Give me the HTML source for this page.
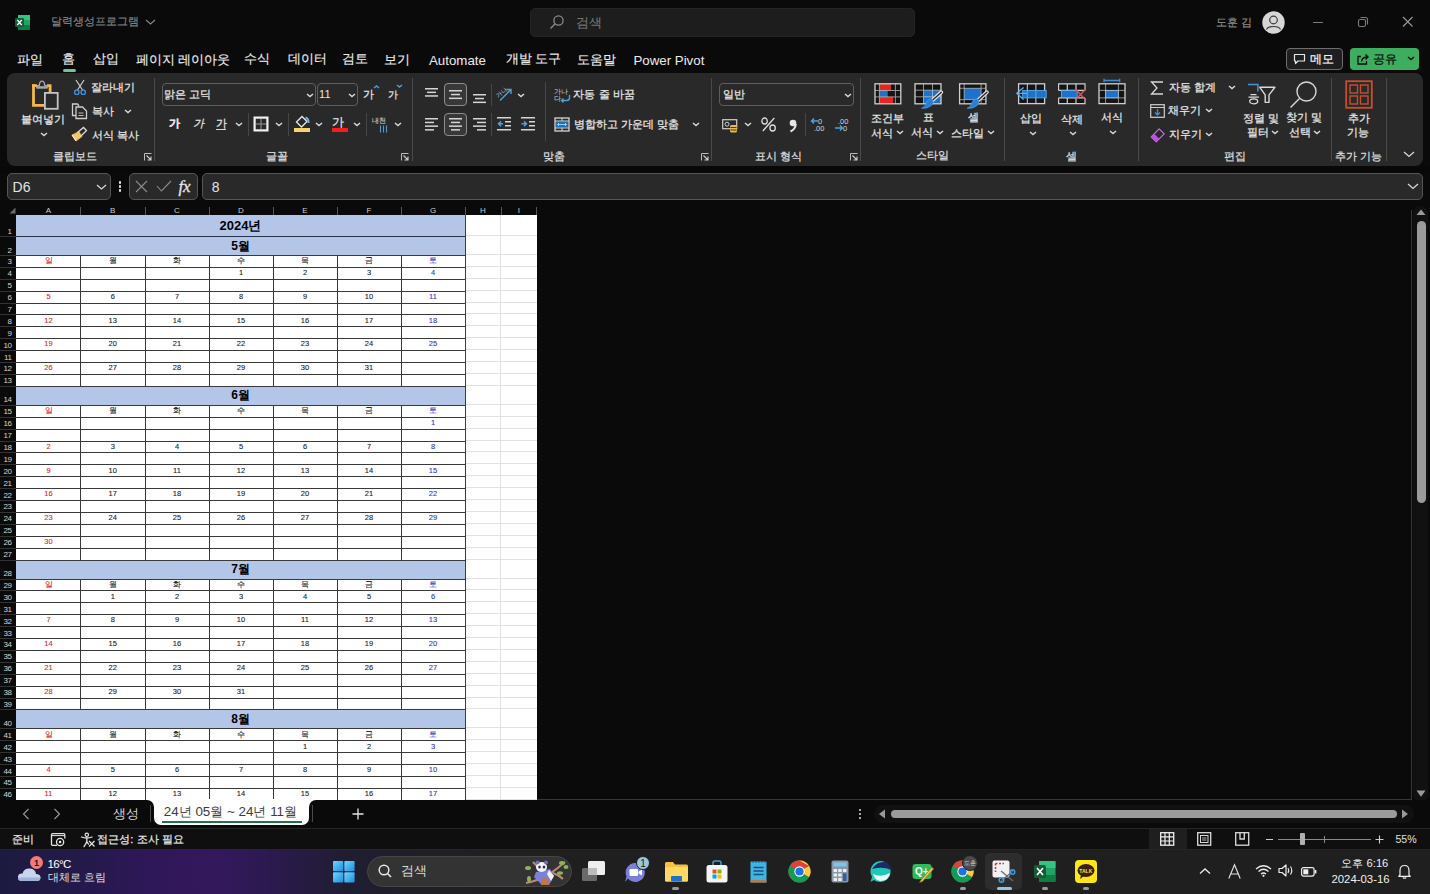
<!DOCTYPE html><html><head><meta charset="utf-8"><style>
*{margin:0;padding:0;box-sizing:border-box}
html,body{width:1430px;height:894px;overflow:hidden;background:#0a0a0a;font-family:"Liberation Sans",sans-serif;color:#fff}
.ab{position:absolute}
.t{position:absolute;white-space:nowrap;line-height:1}
.tx{position:absolute;white-space:nowrap;display:flex;align-items:center;line-height:1}
.k{-webkit-text-stroke:0.25px currentColor}
svg{overflow:visible}

.cell{display:flex;align-items:center;justify-content:center;font-size:7.5px;color:#111;-webkit-text-stroke:0.1px currentColor}
.band{display:flex;align-items:center;justify-content:center;font-weight:bold;color:#000}
.colh{display:flex;align-items:center;justify-content:center;font-size:8px;color:#ccc}
.rowh{display:flex;align-items:flex-end;justify-content:flex-end;font-size:8px;color:#d4d4d4;padding-right:3.5px;letter-spacing:-0.4px;padding-bottom:0.5px}
</style></head><body><div class="ab" style="left:0px;top:0px;width:1430px;height:44px;background:#0a0a0a;border-radius:0px;"></div><svg class="ab" style="left:14px;top:14px;" width="17" height="17" viewBox="0 0 17 17"><rect x="4" y="1" width="12" height="15" rx="1.5" fill="#21a366"/><rect x="4" y="1" width="12" height="5" fill="#33c481"/><rect x="4" y="11" width="12" height="5" rx="1" fill="#107c41"/><rect x="1" y="4" width="9" height="9" rx="1.2" fill="#185c37"/><path d="M3.3 6 L7.7 11 M7.7 6 L3.3 11" stroke="#fff" stroke-width="1.3"/></svg><div class="tx" style="left:51.42px;top:14.16px;height:15.68px;font-size:11.20px;color:#8a8a8a;font-weight:normal;-webkit-text-stroke:0.1px currentColor;">달력생성프로그램</div><svg class="ab" style="left:144.5px;top:18.8px" width="11" height="6.5"><polyline points="1,1 5.5,5.0 10,1" fill="none" stroke="#8a8a8a" stroke-width="1.1"/></svg><div class="ab" style="left:530px;top:8px;width:385px;height:29px;background:#1d1d1d;border:1px solid #242424;border-radius:5px;"></div><svg class="ab" style="left:549px;top:14px;" width="16" height="16" viewBox="0 0 16 16"><circle cx="9.5" cy="6.5" r="4.6" fill="none" stroke="#8a8a8a" stroke-width="1.3"/><path d="M6.2 9.8 L1.5 14.5" stroke="#8a8a8a" stroke-width="1.4"/></svg><div class="tx" style="left:575.77px;top:14.18px;height:17.64px;font-size:12.60px;color:#767676;font-weight:normal;-webkit-text-stroke:0.1px currentColor;">검색</div><div class="tx" style="left:1216.32px;top:14.72px;height:15.96px;font-size:11.40px;color:#8e8e8e;font-weight:normal;-webkit-text-stroke:0.2px currentColor;">도훈 김</div><svg class="ab" style="left:1262px;top:11px;" width="23" height="23" viewBox="0 0 23 23"><circle cx="11.5" cy="11.5" r="11.2" fill="#d6d6d6"/><circle cx="11.5" cy="9" r="3.8" fill="none" stroke="#3a3a3a" stroke-width="1.2"/><path d="M4.5 18.5 C6 14.5 17 14.5 18.5 18.5" fill="none" stroke="#3a3a3a" stroke-width="1.2"/></svg><div class="ab" style="left:1313px;top:22px;width:10px;height:1px;background:#7c7c7c;border-radius:0px;"></div><svg class="ab" style="left:1357px;top:16px;" width="12" height="12" viewBox="0 0 12 12"><rect x="1.5" y="3.5" width="7" height="7" rx="1.5" fill="none" stroke="#7c7c7c" stroke-width="1.1"/><path d="M3.5 1.5 H8.5 Q10.5 1.5 10.5 3.5 V8.5" fill="none" stroke="#7c7c7c" stroke-width="1.1"/></svg><svg class="ab" style="left:1402px;top:16px;" width="12" height="12" viewBox="0 0 12 12"><path d="M1 1 L10.5 10.5 M10.5 1 L1 10.5" stroke="#9a9a9a" stroke-width="1.1"/></svg><div class="tx" style="left:16.58px;top:50.09px;height:18.62px;font-size:13.30px;color:#ececec;font-weight:normal;-webkit-text-stroke:0.15px currentColor;">파일</div><div class="tx" style="left:61.79px;top:49.69px;height:18.62px;font-size:13.30px;color:#ececec;font-weight:normal;-webkit-text-stroke:0.15px currentColor;">홈</div><div class="tx" style="left:93.00px;top:49.69px;height:18.62px;font-size:13.30px;color:#ececec;font-weight:normal;-webkit-text-stroke:0.15px currentColor;">삽입</div><div class="tx" style="left:135.78px;top:50.09px;height:18.62px;font-size:13.30px;color:#ececec;font-weight:normal;-webkit-text-stroke:0.15px currentColor;">페이지 레이아웃</div><div class="tx" style="left:243.98px;top:49.69px;height:18.62px;font-size:13.30px;color:#ececec;font-weight:normal;-webkit-text-stroke:0.15px currentColor;">수식</div><div class="tx" style="left:288.20px;top:49.69px;height:18.62px;font-size:13.30px;color:#ececec;font-weight:normal;-webkit-text-stroke:0.15px currentColor;">데이터</div><div class="tx" style="left:341.98px;top:49.69px;height:18.62px;font-size:13.30px;color:#ececec;font-weight:normal;-webkit-text-stroke:0.15px currentColor;">검토</div><div class="tx" style="left:384.39px;top:50.09px;height:18.62px;font-size:13.30px;color:#ececec;font-weight:normal;-webkit-text-stroke:0.15px currentColor;">보기</div><div class="tx" style="left:429.00px;top:50.89px;height:18.62px;font-size:13.30px;color:#ececec;font-weight:normal;">Automate</div><div class="tx" style="left:505.77px;top:49.69px;height:18.62px;font-size:13.30px;color:#ececec;font-weight:normal;-webkit-text-stroke:0.15px currentColor;">개발 도구</div><div class="tx" style="left:576.79px;top:50.09px;height:18.62px;font-size:13.30px;color:#ececec;font-weight:normal;-webkit-text-stroke:0.15px currentColor;">도움말</div><div class="tx" style="left:633.38px;top:50.89px;height:18.62px;font-size:13.30px;color:#ececec;font-weight:normal;">Power Pivot</div><div class="ab" style="left:63px;top:69px;width:13px;height:3px;background:#6bc49b;border-radius:1.5px;"></div><div class="ab" style="left:1286px;top:48px;width:57px;height:22px;background:#1f1f1f;border:1px solid #6e6e6e;border-radius:4px;"></div><svg class="ab" style="left:1293px;top:53px;" width="13" height="12" viewBox="0 0 13 12"><path d="M1.5 1.5 H11.5 V8 H5 L2.5 10.5 V8 H1.5 Z" fill="none" stroke="#e8e8e8" stroke-width="1.2" stroke-linejoin="round"/></svg><div class="tx k" style="left:1310.36px;top:50.88px;height:16.24px;font-size:11.60px;color:#f0f0f0;font-weight:normal;">메모</div><div class="ab" style="left:1350px;top:48px;width:69px;height:22px;background:#3dae60;border-radius:4px;"></div><svg class="ab" style="left:1356px;top:52px;" width="14" height="14" viewBox="0 0 14 14"><path d="M5 4.5 H2 V12 H10.5 V9" fill="none" stroke="#0c0c0c" stroke-width="1.3"/><path d="M5.5 9.5 C6 6.5 8 5 11.5 5 M9.5 2.5 L12 5 L9.5 7.5" fill="none" stroke="#0c0c0c" stroke-width="1.3"/></svg><div class="tx k" style="left:1372.80px;top:50.88px;height:16.24px;font-size:11.60px;color:#0c0c0c;font-weight:normal;">공유</div><svg class="ab" style="left:1407.2px;top:56.4px" width="8" height="5.0"><polyline points="1,1 4.0,3.5 7,1" fill="none" stroke="#0c0c0c" stroke-width="1.4"/></svg><div class="ab" style="left:7px;top:73px;width:1416px;height:93px;background:#292929;border-radius:8px;"></div><div class="ab" style="left:0px;top:166px;width:1430px;height:7px;background:#080808;border-radius:0px;"></div><svg class="ab" style="left:30px;top:79px;" width="29" height="31" viewBox="0 0 29 31"><path d="M3.5 5.2 V26.4 H14" fill="none" stroke="#f2b84b" stroke-width="2.8"/><path d="M2.1 6.6 H7 M17 6.6 H20.1 V13" fill="none" stroke="#f2b84b" stroke-width="2.8"/><path d="M7 8.8 V6.6 H9.2 Q9.6 2.1 12 2.1 Q14.4 2.1 14.8 6.6 H17 V8.8 Z" fill="#292929" stroke="#a8a8a8" stroke-width="1.4" stroke-linejoin="round"/><rect x="6.4" y="7.2" width="11.2" height="2.2" fill="#a8a8a8"/><rect x="14.9" y="13.9" width="12.8" height="15.9" fill="#292929" stroke="#c4c4c4" stroke-width="1.8"/></svg><div class="tx k" style="left:20.75px;top:112.02px;height:15.96px;font-size:11.40px;color:#e6e6e6;font-weight:normal;">붙여넣기</div><svg class="ab" style="left:40.0px;top:131.5px" width="8" height="5.0"><polyline points="1,1 4.0,3.5 7,1" fill="none" stroke="#d8d8d8" stroke-width="1.5"/></svg><svg class="ab" style="left:73px;top:79px;" width="14" height="17" viewBox="0 0 14 17"><path d="M3 1 L9.5 11 M11 1 L4.5 11" stroke="#cfcfcf" stroke-width="1.2"/><circle cx="3.8" cy="13.2" r="2.2" fill="none" stroke="#3d8fd6" stroke-width="1.4"/><circle cx="10.2" cy="13.2" r="2.2" fill="none" stroke="#3d8fd6" stroke-width="1.4"/></svg><div class="tx k" style="left:90.76px;top:79.52px;height:15.96px;font-size:11.40px;color:#e6e6e6;font-weight:normal;">잘라내기</div><svg class="ab" style="left:71px;top:103px;" width="17" height="17" viewBox="0 0 17 17"><path d="M5 12.5 H1.5 V1 H6.5 L8 3" fill="none" stroke="#cfcfcf" stroke-width="1.3"/><path d="M5 4 H11.5 L15.5 8 V15.5 H5 Z" fill="none" stroke="#cfcfcf" stroke-width="1.3"/><path d="M7.5 10 H12.5 M7.5 12.5 H12.5" stroke="#cfcfcf" stroke-width="0.9"/></svg><div class="tx k" style="left:91.76px;top:103.32px;height:15.96px;font-size:11.40px;color:#e6e6e6;font-weight:normal;">복사</div><svg class="ab" style="left:123.5px;top:109.0px" width="8" height="5.0"><polyline points="1,1 4.0,3.5 7,1" fill="none" stroke="#d8d8d8" stroke-width="1.5"/></svg><svg class="ab" style="left:71px;top:126px;" width="17" height="16" viewBox="0 0 17 16"><path d="M1 9 L8 5.5 L11 10.5 L5 15 Z" fill="#f4c869" stroke="#f0b03a" stroke-width="0.8"/><path d="M1 9 L5 15" stroke="#ffffff" stroke-width="1"/><path d="M6.5 6.5 L12.5 1.5 L15.5 4.5 L10 10" fill="none" stroke="#dcdcdc" stroke-width="1.3"/></svg><div class="tx k" style="left:91.75px;top:127.42px;height:15.96px;font-size:11.40px;color:#e6e6e6;font-weight:normal;">서식 복사</div><div class="tx k" style="left:52.97px;top:149.12px;height:15.96px;font-size:11.40px;color:#dedede;font-weight:normal;">클립보드</div><svg class="ab" style="left:144px;top:153px;" width="8" height="8" viewBox="0 0 8 8"><path d="M0.5 7.5 V0.5 H7.5" fill="none" stroke="#bdbdbd" stroke-width="1"/><path d="M2.5 2.5 L7 7 M7 3.5 V7 H3.5" fill="none" stroke="#d0d0d0" stroke-width="1.1"/></svg><div class="ab" style="left:154px;top:78px;width:1px;height:83px;background:#4a4a4a"></div><div class="ab" style="left:162px;top:83px;width:154px;height:23px;background:#292929;border:1px solid #5e5e5e;border-radius:4px;"></div><div class="tx k" style="left:163.97px;top:86.62px;height:15.96px;font-size:11.40px;color:#e6e6e6;font-weight:normal;">맑은 고딕</div><svg class="ab" style="left:306.0px;top:92.5px" width="8" height="5.0"><polyline points="1,1 4.0,3.5 7,1" fill="none" stroke="#d8d8d8" stroke-width="1.5"/></svg><div class="ab" style="left:317px;top:83px;width:41px;height:23px;background:#292929;border:1px solid #5e5e5e;border-radius:4px;"></div><div class="tx" style="left:319.12px;top:87.30px;height:15.40px;font-size:11.00px;color:#e6e6e6;font-weight:normal;">11</div><svg class="ab" style="left:348.0px;top:92.5px" width="8" height="5.0"><polyline points="1,1 4.0,3.5 7,1" fill="none" stroke="#d8d8d8" stroke-width="1.5"/></svg><div class="tx k" style="left:362.5px;top:87.2px;height:14.7px;font-size:10.5px;color:#e6e6e6;font-weight:normal;">가</div><svg class="ab" style="left:372.5px;top:85.2px" width="7" height="4.5"><polyline points="1,3.0 3.5,1 6,3.0" fill="none" stroke="#4aa3df" stroke-width="1.4"/></svg><div class="tx k" style="left:387.5px;top:88.0px;height:14.0px;font-size:10px;color:#e6e6e6;font-weight:normal;">가</div><svg class="ab" style="left:396.0px;top:84.2px" width="7" height="4.5"><polyline points="1,1 3.5,3.0 6,1" fill="none" stroke="#4aa3df" stroke-width="1.4"/></svg><div class="tx k" style="left:169.0px;top:115.8px;height:15.4px;font-size:11px;color:#e6e6e6;font-weight:bold;">가</div><div class="tx k" style="left:192.5px;top:115.8px;height:15.4px;font-size:11px;color:#e6e6e6;font-weight:normal;font-style:italic;">가</div><div class="tx k" style="left:216.0px;top:115.8px;height:15.4px;font-size:11px;color:#e6e6e6;font-weight:normal;">가</div><div class="ab" style="left:216px;top:129px;width:10px;height:1px;background:#d8d8d8;border-radius:0px;"></div><svg class="ab" style="left:234.5px;top:121.5px" width="8" height="5.0"><polyline points="1,1 4.0,3.5 7,1" fill="none" stroke="#d8d8d8" stroke-width="1.5"/></svg><div class="ab" style="left:248px;top:113px;width:1px;height:23px;background:#464646"></div><svg class="ab" style="left:253px;top:116px;" width="16" height="16" viewBox="0 0 16 16"><rect x="1.6" y="1.6" width="12.8" height="12.8" fill="none" stroke="#f2f2f2" stroke-width="2.2"/><path d="M8 3 V13 M3 8 H13" stroke="#9a9a9a" stroke-width="1"/></svg><svg class="ab" style="left:274.7px;top:121.5px" width="8" height="5.0"><polyline points="1,1 4.0,3.5 7,1" fill="none" stroke="#d8d8d8" stroke-width="1.5"/></svg><div class="ab" style="left:288px;top:113px;width:1px;height:23px;background:#464646"></div><svg class="ab" style="left:293px;top:113px;" width="18" height="20" viewBox="0 0 18 20"><path d="M3.5 9 L9 3.5 L14 8.5 L8.5 14 Z" fill="none" stroke="#e8e8e8" stroke-width="1.3"/><path d="M12.5 4.5 Q16 6 15.5 10" fill="none" stroke="#6fb2e3" stroke-width="2"/><rect x="1" y="15" width="16" height="4" fill="#f5d56b"/></svg><svg class="ab" style="left:315.2px;top:121.5px" width="8" height="5.0"><polyline points="1,1 4.0,3.5 7,1" fill="none" stroke="#d8d8d8" stroke-width="1.5"/></svg><div class="tx k" style="left:332.0px;top:113.6px;height:16.8px;font-size:12px;color:#e6e6e6;font-weight:normal;">가</div><div class="ab" style="left:332px;top:128px;width:16px;height:4px;background:#ff1a1a;border-radius:0px;"></div><svg class="ab" style="left:353.4px;top:121.5px" width="8" height="5.0"><polyline points="1,1 4.0,3.5 7,1" fill="none" stroke="#d8d8d8" stroke-width="1.5"/></svg><div class="ab" style="left:366px;top:113px;width:1px;height:23px;background:#464646"></div><div class="tx k" style="left:371.5px;top:115.6px;height:9.8px;font-size:7px;color:#bdbdbd;font-weight:normal;-webkit-text-stroke:0.2px currentColor;">내천</div><svg class="ab" style="left:379px;top:125px;" width="9" height="8" viewBox="0 0 9 8"><path d="M1.5 0.5 V7.5 M4.5 0.5 V7.5 M7.5 0.5 V7.5" stroke="#4a9ad8" stroke-width="1.1"/></svg><svg class="ab" style="left:393.5px;top:121.5px" width="8" height="5.0"><polyline points="1,1 4.0,3.5 7,1" fill="none" stroke="#d8d8d8" stroke-width="1.5"/></svg><div class="tx k" style="left:265.75px;top:148.72px;height:15.96px;font-size:11.40px;color:#dedede;font-weight:normal;">글꼴</div><svg class="ab" style="left:401px;top:153px;" width="8" height="8" viewBox="0 0 8 8"><path d="M0.5 7.5 V0.5 H7.5" fill="none" stroke="#bdbdbd" stroke-width="1"/><path d="M2.5 2.5 L7 7 M7 3.5 V7 H3.5" fill="none" stroke="#d0d0d0" stroke-width="1.1"/></svg><div class="ab" style="left:412px;top:78px;width:1px;height:83px;background:#4a4a4a"></div><div class="ab" style="left:444px;top:83px;width:23px;height:23px;background:#383838;border:1px solid #8e8e8e;border-radius:4px;"></div><div class="ab" style="left:444px;top:113px;width:23px;height:23px;background:#383838;border:1px solid #8e8e8e;border-radius:4px;"></div><svg class="ab" style="left:425px;top:87.5px;" width="13" height="12.8" viewBox="0 0 13 12.8"><rect x="0.0" y="0.0" width="13" height="1.5" fill="#d6d6d6"/><rect x="2.0" y="3.6" width="9" height="1.5" fill="#d6d6d6"/><rect x="0.0" y="7.2" width="13" height="1.5" fill="#d6d6d6"/></svg><svg class="ab" style="left:449px;top:89.5px;" width="13" height="13.399999999999999" viewBox="0 0 13 13.399999999999999"><rect x="0.0" y="0.0" width="13" height="1.5" fill="#d6d6d6"/><rect x="2.0" y="3.8" width="9" height="1.5" fill="#d6d6d6"/><rect x="0.0" y="7.6" width="13" height="1.5" fill="#d6d6d6"/></svg><svg class="ab" style="left:472.5px;top:93.5px;" width="13" height="13.399999999999999" viewBox="0 0 13 13.399999999999999"><rect x="0.0" y="0.0" width="13" height="1.5" fill="#d6d6d6"/><rect x="2.0" y="3.8" width="9" height="1.5" fill="#d6d6d6"/><rect x="0.0" y="7.6" width="13" height="1.5" fill="#d6d6d6"/></svg><svg class="ab" style="left:425px;top:117.5px;" width="13" height="16.8" viewBox="0 0 13 16.8"><rect x="0" y="0.0" width="13" height="1.5" fill="#d6d6d6"/><rect x="0" y="3.7" width="9" height="1.5" fill="#d6d6d6"/><rect x="0" y="7.4" width="13" height="1.5" fill="#d6d6d6"/><rect x="0" y="11.100000000000001" width="9" height="1.5" fill="#d6d6d6"/></svg><svg class="ab" style="left:449px;top:117.5px;" width="13" height="16.8" viewBox="0 0 13 16.8"><rect x="0.0" y="0.0" width="13" height="1.5" fill="#d6d6d6"/><rect x="2.0" y="3.7" width="9" height="1.5" fill="#d6d6d6"/><rect x="0.0" y="7.4" width="13" height="1.5" fill="#d6d6d6"/><rect x="2.0" y="11.100000000000001" width="9" height="1.5" fill="#d6d6d6"/></svg><svg class="ab" style="left:472.5px;top:117.5px;" width="13" height="16.8" viewBox="0 0 13 16.8"><rect x="0" y="0.0" width="13" height="1.5" fill="#d6d6d6"/><rect x="4" y="3.7" width="9" height="1.5" fill="#d6d6d6"/><rect x="0" y="7.4" width="13" height="1.5" fill="#d6d6d6"/><rect x="4" y="11.100000000000001" width="9" height="1.5" fill="#d6d6d6"/></svg><div class="ab" style="left:491px;top:84px;width:1px;height:22px;background:#464646"></div><div class="ab" style="left:491px;top:113px;width:1px;height:23px;background:#464646"></div><svg class="ab" style="left:496px;top:86px;" width="18" height="16" viewBox="0 0 18 16"><text x="0" y="10" font-size="6" fill="#d8d8d8" transform="rotate(-40 4 8)" font-family="Liberation Sans">가나</text><path d="M4 14.5 L15 3.5 M10.5 3.5 H15 V8" fill="none" stroke="#4aa3df" stroke-width="1.4"/></svg><svg class="ab" style="left:516.7px;top:92.5px" width="8" height="5.0"><polyline points="1,1 4.0,3.5 7,1" fill="none" stroke="#d8d8d8" stroke-width="1.5"/></svg><svg class="ab" style="left:497px;top:117px;" width="15" height="15" viewBox="0 0 15 15"><rect x="0" y="0" width="14" height="1.5" fill="#d6d6d6"/><rect x="8" y="4" width="6" height="1.5" fill="#d6d6d6"/><rect x="8" y="8" width="6" height="1.5" fill="#d6d6d6"/><rect x="0" y="12" width="14" height="1.5" fill="#d6d6d6"/><path d="M6 6.7 H1.5 M4 4.2 L1.5 6.7 L4 9.2" fill="none" stroke="#4aa3df" stroke-width="1.5"/></svg><svg class="ab" style="left:521px;top:117px;" width="15" height="15" viewBox="0 0 15 15"><rect x="0" y="0" width="14" height="1.5" fill="#d6d6d6"/><rect x="8" y="4" width="6" height="1.5" fill="#d6d6d6"/><rect x="8" y="8" width="6" height="1.5" fill="#d6d6d6"/><rect x="0" y="12" width="14" height="1.5" fill="#d6d6d6"/><path d="M0.5 6.7 H5.5 M3 4.2 L5.5 6.7 L3 9.2" fill="none" stroke="#4aa3df" stroke-width="1.5"/></svg><div class="ab" style="left:545px;top:82px;width:1px;height:59px;background:#464646"></div><svg class="ab" style="left:554px;top:87px;" width="18" height="16" viewBox="0 0 18 16"><text x="0" y="6.5" font-size="6.5" fill="#d8d8d8" font-family="Liberation Sans">가나</text><text x="0" y="13.5" font-size="6.5" fill="#d8d8d8" font-family="Liberation Sans">다</text><path d="M15.5 8 V11 Q15.5 13.5 12.5 13.5 H7.5 M9.5 11.5 L7.5 13.5 L9.5 15.5" fill="none" stroke="#4aa3df" stroke-width="1.4"/></svg><div class="tx k" style="left:573.35px;top:87.12px;height:15.96px;font-size:11.40px;color:#e6e6e6;font-weight:normal;">자동 줄 바꿈</div><svg class="ab" style="left:554px;top:117px;" width="16" height="15" viewBox="0 0 16 15"><rect x="1" y="1" width="14" height="13" fill="none" stroke="#d6d6d6" stroke-width="1.3"/><rect x="2" y="4.5" width="12" height="6" fill="#1f6fb2"/><path d="M1 4 H15 M1 11 H15 M8 1 V4 M8 11 V14" stroke="#d6d6d6" stroke-width="1"/><path d="M3.5 7.5 H12.5 M5 6 L3.5 7.5 L5 9 M11 6 L12.5 7.5 L11 9" fill="none" stroke="#8fd0ff" stroke-width="1"/></svg><div class="tx k" style="left:573.58px;top:116.72px;height:15.96px;font-size:11.40px;color:#e6e6e6;font-weight:normal;">병합하고 가운데 맞춤</div><svg class="ab" style="left:692.0px;top:122.0px" width="8" height="5.0"><polyline points="1,1 4.0,3.5 7,1" fill="none" stroke="#d8d8d8" stroke-width="1.5"/></svg><div class="tx k" style="left:542.91px;top:149.22px;height:15.96px;font-size:11.40px;color:#dedede;font-weight:normal;">맞춤</div><svg class="ab" style="left:701px;top:153px;" width="8" height="8" viewBox="0 0 8 8"><path d="M0.5 7.5 V0.5 H7.5" fill="none" stroke="#bdbdbd" stroke-width="1"/><path d="M2.5 2.5 L7 7 M7 3.5 V7 H3.5" fill="none" stroke="#d0d0d0" stroke-width="1.1"/></svg><div class="ab" style="left:711px;top:78px;width:1px;height:83px;background:#4a4a4a"></div><div class="ab" style="left:719px;top:83px;width:135px;height:23px;background:#292929;border:1px solid #5e5e5e;border-radius:4px;"></div><div class="tx k" style="left:722.77px;top:86.62px;height:15.96px;font-size:11.40px;color:#e6e6e6;font-weight:normal;">일반</div><svg class="ab" style="left:844.0px;top:92.5px" width="8" height="5.0"><polyline points="1,1 4.0,3.5 7,1" fill="none" stroke="#d8d8d8" stroke-width="1.5"/></svg><svg class="ab" style="left:722px;top:119px;" width="17" height="14" viewBox="0 0 17 14"><rect x="0.7" y="0.7" width="14" height="9" fill="none" stroke="#cfcfcf" stroke-width="1.2"/><circle cx="5" cy="5.2" r="2" fill="none" stroke="#cfcfcf" stroke-width="1"/><rect x="8" y="6" width="7" height="7.5" rx="1.5" fill="#e7b94a"/><path d="M8.5 8.5 H14.5 M8.5 11 H14.5" stroke="#292929" stroke-width="0.9"/></svg><svg class="ab" style="left:744.0px;top:121.5px" width="8" height="5.0"><polyline points="1,1 4.0,3.5 7,1" fill="none" stroke="#d8d8d8" stroke-width="1.5"/></svg><svg class="ab" style="left:760px;top:116px;" width="18" height="17" viewBox="0 0 18 17"><ellipse cx="4.6" cy="5" rx="2.7" ry="3" fill="none" stroke="#dedede" stroke-width="1.3"/><ellipse cx="12.6" cy="12" rx="2.7" ry="3" fill="none" stroke="#dedede" stroke-width="1.3"/><path d="M14.3 2 L2.8 15" stroke="#dedede" stroke-width="1.3"/></svg><svg class="ab" style="left:788px;top:119px;" width="10" height="13" viewBox="0 0 10 13"><circle cx="5" cy="4" r="3.3" fill="#e6e6e6"/><path d="M7.8 5 Q7.5 10 2.5 12.5" fill="none" stroke="#e6e6e6" stroke-width="2"/></svg><div class="ab" style="left:805px;top:113px;width:1px;height:23px;background:#464646"></div><svg class="ab" style="left:810px;top:117px;" width="17" height="15" viewBox="0 0 17 15"><text x="8" y="7" font-size="7.5" fill="#d8d8d8" font-family="Liberation Sans">0</text><text x="4" y="14" font-size="7.5" fill="#d8d8d8" font-family="Liberation Sans">.00</text><path d="M8 4 H1.5 M4 1.5 L1.5 4 L4 6.5" fill="none" stroke="#4aa3df" stroke-width="1.4"/></svg><svg class="ab" style="left:834px;top:117px;" width="17" height="15" viewBox="0 0 17 15"><text x="4" y="7" font-size="7.5" fill="#d8d8d8" font-family="Liberation Sans">.00</text><text x="9" y="14" font-size="7.5" fill="#d8d8d8" font-family="Liberation Sans">0</text><path d="M1 11 H8.5 M6 8.5 L8.5 11 L6 13.5" fill="none" stroke="#4aa3df" stroke-width="1.4"/></svg><div class="tx k" style="left:754.96px;top:148.52px;height:15.96px;font-size:11.40px;color:#dedede;font-weight:normal;">표시 형식</div><svg class="ab" style="left:850px;top:153px;" width="8" height="8" viewBox="0 0 8 8"><path d="M0.5 7.5 V0.5 H7.5" fill="none" stroke="#bdbdbd" stroke-width="1"/><path d="M2.5 2.5 L7 7 M7 3.5 V7 H3.5" fill="none" stroke="#d0d0d0" stroke-width="1.1"/></svg><div class="ab" style="left:860px;top:78px;width:1px;height:83px;background:#4a4a4a"></div><svg class="ab" style="left:874px;top:83px;" width="28" height="22" viewBox="0 0 28 22"><rect x="1" y="0.8" width="25.8" height="20" fill="#141414"/><rect x="5.4" y="0.8" width="11.7" height="6.7" fill="#e5261d"/><rect x="5.4" y="7.5" width="8.3" height="6.4" fill="#1f72c9"/><rect x="5.4" y="13.9" width="13.9" height="6.9" fill="#e5261d"/><rect x="1" y="0.8" width="25.8" height="20" fill="none" stroke="#cfcfcf" stroke-width="1.3"/><path d="M5.4 0.8 V20.8 M21.4 0.8 V20.8 M1 7.5 H26.8 M1 13.9 H26.8" stroke="#cfcfcf" stroke-width="0.9" opacity="0.75"/></svg><svg class="ab" style="left:914px;top:83px;" width="30" height="27" viewBox="0 0 30 27"><rect x="1" y="0.8" width="26" height="20" fill="#141414"/><rect x="9.5" y="7.2" width="17.5" height="13.6" fill="#1f72c9"/><rect x="1" y="0.8" width="26" height="20" fill="none" stroke="#cfcfcf" stroke-width="1.3"/><path d="M9.5 0.8 V20.8 M18.5 0.8 V20.8 M1 7.2 H27 M1 13.8 H27" stroke="#cfcfcf" stroke-width="0.9" opacity="0.75"/><path d="M27.3 9.2 L18.2 17.6" stroke="#e4e4e4" stroke-width="3.8" stroke-linecap="round"/><path d="M27.3 9.2 L18.2 17.6" stroke="#292929" stroke-width="1.4" stroke-linecap="round"/><path d="M18.5 16.5 Q20.5 19.5 17.5 22.5 Q13.5 26 7.5 25.3 Q11.5 23.5 12 20.5 Q13 16.5 16.5 15.8 Z" fill="#2a7fd6" stroke="#4ea6ea" stroke-width="0.6"/></svg><svg class="ab" style="left:959px;top:83px;" width="31" height="27" viewBox="0 0 31 27"><rect x="0.6" y="0.8" width="26.3" height="20" fill="#141414"/><rect x="5.2" y="5.3" width="16.9" height="11.3" fill="#1f72c9"/><rect x="0.6" y="0.8" width="26.3" height="20" fill="none" stroke="#cfcfcf" stroke-width="1.3"/><path d="M5.2 0.8 V20.8 M22.1 0.8 V20.8 M0.6 5.3 H26.9 M0.6 16.6 H26.9" stroke="#cfcfcf" stroke-width="0.9" opacity="0.75"/><path d="M27.900000000000002 9.2 L18.8 17.6" stroke="#e4e4e4" stroke-width="3.8" stroke-linecap="round"/><path d="M27.900000000000002 9.2 L18.8 17.6" stroke="#292929" stroke-width="1.4" stroke-linecap="round"/><path d="M19.1 16.5 Q21.1 19.5 18.1 22.5 Q14.1 26 8.1 25.3 Q12.1 23.5 12.6 20.5 Q13.6 16.5 17.1 15.8 Z" fill="#2a7fd6" stroke="#4ea6ea" stroke-width="0.6"/></svg><div class="tx k" style="left:870.73px;top:110.42px;height:15.96px;font-size:11.40px;color:#e6e6e6;font-weight:normal;">조건부</div><div class="tx k" style="left:870.78px;top:125.32px;height:15.96px;font-size:11.40px;color:#e6e6e6;font-weight:normal;">서식</div><svg class="ab" style="left:896.1px;top:129.5px" width="8" height="5.0"><polyline points="1,1 4.0,3.5 7,1" fill="none" stroke="#d8d8d8" stroke-width="1.5"/></svg><div class="tx k" style="left:923.15px;top:110.02px;height:15.96px;font-size:11.40px;color:#e6e6e6;font-weight:normal;">표</div><div class="tx k" style="left:911.36px;top:124.92px;height:15.96px;font-size:11.40px;color:#e6e6e6;font-weight:normal;">서식</div><svg class="ab" style="left:936.3px;top:129.5px" width="8" height="5.0"><polyline points="1,1 4.0,3.5 7,1" fill="none" stroke="#d8d8d8" stroke-width="1.5"/></svg><div class="tx k" style="left:968.21px;top:110.02px;height:15.96px;font-size:11.40px;color:#e6e6e6;font-weight:normal;">셀</div><div class="tx k" style="left:950.57px;top:125.32px;height:15.96px;font-size:11.40px;color:#e6e6e6;font-weight:normal;">스타일</div><svg class="ab" style="left:986.7px;top:129.5px" width="8" height="5.0"><polyline points="1,1 4.0,3.5 7,1" fill="none" stroke="#d8d8d8" stroke-width="1.5"/></svg><div class="tx k" style="left:916.33px;top:148.22px;height:15.96px;font-size:11.40px;color:#dedede;font-weight:normal;">스타일</div><div class="ab" style="left:1004px;top:78px;width:1px;height:83px;background:#4a4a4a"></div><svg class="ab" style="left:1015px;top:80px;" width="33" height="27" viewBox="0 0 33 27"><rect x="3.6" y="3.8" width="26" height="19.8" fill="#141414"/><rect x="3.6" y="3.8" width="26" height="19.8" fill="none" stroke="#cfcfcf" stroke-width="1.3"/><path d="M12.3 3.8 V23.6 M20.9 3.8 V23.6" stroke="#cfcfcf" stroke-width="1"/><rect x="7.7" y="10.4" width="23.5" height="7.5" fill="#1f72c9" stroke="#5db3f0" stroke-width="0.8"/><path d="M12.3 10.4 V17.9 M20.9 10.4 V17.9" stroke="#5db3f0" stroke-width="0.8"/><path d="M8.6 7.6 L1.8 13.3 L8.6 19.5" fill="none" stroke="#5db3f0" stroke-width="1.3"/><path d="M2.5 13.3 H12" stroke="#5db3f0" stroke-width="1.2"/></svg><svg class="ab" style="left:1057px;top:80px;" width="31" height="27" viewBox="0 0 31 27"><rect x="1.6" y="3.8" width="26.4" height="6.6" fill="#141414"/><rect x="1.6" y="17.9" width="26.4" height="5.7" fill="#141414"/><path d="M1.6 10.4 V3.8 H28 V10.4 M1.6 17.9 V23.6 H28 V17.9 M1.6 10.4 H28 M1.6 17.9 H28 M10.3 3.8 V10.4 M19 3.8 V10.4 M10.3 17.9 V23.6 M19 17.9 V23.6" fill="none" stroke="#cfcfcf" stroke-width="1.2"/><rect x="4.5" y="10.6" width="15.7" height="7" fill="#1f72c9" stroke="#5db3f0" stroke-width="0.8"/><path d="M18.2 9 L28.8 19.9 M28.8 9 L18.2 19.9" stroke="#e25555" stroke-width="1.4"/></svg><svg class="ab" style="left:1098px;top:78px;" width="28" height="27" viewBox="0 0 28 27"><rect x="1" y="5.8" width="26" height="19.8" fill="#141414"/><rect x="7.6" y="12.4" width="12.8" height="7.5" fill="#1f72c9" stroke="#5db3f0" stroke-width="0.6"/><rect x="1" y="5.8" width="26" height="19.8" fill="none" stroke="#cfcfcf" stroke-width="1.3"/><path d="M7.6 5.8 V25.6 M20.4 5.8 V25.6 M1 12.4 H27 M1 19.9 H27" stroke="#cfcfcf" stroke-width="0.9" opacity="0.75"/><path d="M6 2.5 H21.7 M6 0.8 V4.2 M21.7 0.8 V4.2" stroke="#3d8fd6" stroke-width="1.3"/></svg><div class="tx k" style="left:1020.41px;top:111.02px;height:15.96px;font-size:11.40px;color:#e6e6e6;font-weight:normal;">삽입</div><svg class="ab" style="left:1028.5px;top:131.0px" width="8" height="5.0"><polyline points="1,1 4.0,3.5 7,1" fill="none" stroke="#d8d8d8" stroke-width="1.5"/></svg><div class="tx k" style="left:1060.80px;top:111.42px;height:15.96px;font-size:11.40px;color:#e6e6e6;font-weight:normal;">삭제</div><svg class="ab" style="left:1068.9px;top:131.0px" width="8" height="5.0"><polyline points="1,1 4.0,3.5 7,1" fill="none" stroke="#d8d8d8" stroke-width="1.5"/></svg><div class="tx k" style="left:1100.94px;top:109.82px;height:15.96px;font-size:11.40px;color:#e6e6e6;font-weight:normal;">서식</div><svg class="ab" style="left:1109.2px;top:129.8px" width="8" height="5.0"><polyline points="1,1 4.0,3.5 7,1" fill="none" stroke="#d8d8d8" stroke-width="1.5"/></svg><div class="tx k" style="left:1066.21px;top:148.72px;height:15.96px;font-size:11.40px;color:#dedede;font-weight:normal;">셀</div><div class="ab" style="left:1138px;top:78px;width:1px;height:83px;background:#4a4a4a"></div><svg class="ab" style="left:1150px;top:81px;" width="15" height="14" viewBox="0 0 15 14"><path d="M13 1 H1.5 L7 7 L1.5 13 H13" fill="none" stroke="#d8d8d8" stroke-width="1.3"/></svg><div class="tx k" style="left:1169.33px;top:79.42px;height:15.96px;font-size:11.40px;color:#e6e6e6;font-weight:normal;">자동 합계</div><svg class="ab" style="left:1227.5px;top:85.2px" width="8" height="5.0"><polyline points="1,1 4.0,3.5 7,1" fill="none" stroke="#d8d8d8" stroke-width="1.5"/></svg><svg class="ab" style="left:1150px;top:104px;" width="15" height="14" viewBox="0 0 15 14"><rect x="0.7" y="0.7" width="13.6" height="12.6" fill="none" stroke="#cfcfcf" stroke-width="1.2"/><path d="M1 3.5 H14" stroke="#cfcfcf" stroke-width="1"/><path d="M7.5 5 V11 M5 8.5 L7.5 11 L10 8.5" fill="none" stroke="#3d8fd6" stroke-width="1.4"/></svg><div class="tx k" style="left:1168.41px;top:103.22px;height:15.96px;font-size:11.40px;color:#e6e6e6;font-weight:normal;">채우기</div><svg class="ab" style="left:1205.1px;top:108.1px" width="8" height="5.0"><polyline points="1,1 4.0,3.5 7,1" fill="none" stroke="#d8d8d8" stroke-width="1.5"/></svg><svg class="ab" style="left:1150px;top:127px;" width="16" height="16" viewBox="0 0 16 16"><path d="M1.2 9.8 L9.2 1.8 L14.2 6.8 L6.2 14.8 Z" fill="none" stroke="#c86ee6" stroke-width="1.2" stroke-linejoin="round"/><path d="M1.2 9.8 L4.2 6.8 L9.2 11.8 L6.2 14.8 Z" fill="#c050e0"/></svg><div class="tx k" style="left:1169.36px;top:127.02px;height:15.96px;font-size:11.40px;color:#e6e6e6;font-weight:normal;">지우기</div><svg class="ab" style="left:1205.1px;top:131.7px" width="8" height="5.0"><polyline points="1,1 4.0,3.5 7,1" fill="none" stroke="#d8d8d8" stroke-width="1.5"/></svg><svg class="ab" style="left:1247px;top:82px;" width="30" height="24" viewBox="0 0 30 24"><path d="M0.9 2.5 H10.9 V9.4" fill="none" stroke="#4a93cf" stroke-width="1.5"/><path d="M3.5 12.6 H9.5 M1.5 15.1 H11.9" stroke="#dcdcdc" stroke-width="1.3"/><ellipse cx="6.7" cy="19.3" rx="4" ry="2.5" fill="none" stroke="#dcdcdc" stroke-width="1.3"/><path d="M12.8 5.3 H27.9 L22 12.9 V20.4 H18.2 V12.9 Z" fill="none" stroke="#d8d8d8" stroke-width="1.4" stroke-linejoin="round"/></svg><svg class="ab" style="left:1289px;top:80px;" width="30" height="29" viewBox="0 0 30 29"><circle cx="17.5" cy="11.5" r="9.5" fill="none" stroke="#d8d8d8" stroke-width="1.4"/><path d="M10.5 18.5 L1.5 27.5" stroke="#d8d8d8" stroke-width="1.5"/></svg><div class="tx k" style="left:1242.74px;top:110.62px;height:15.96px;font-size:11.40px;color:#e6e6e6;font-weight:normal;">정렬 및</div><div class="tx k" style="left:1246.58px;top:124.72px;height:15.96px;font-size:11.40px;color:#e6e6e6;font-weight:normal;">필터</div><svg class="ab" style="left:1270.6px;top:129.7px" width="8" height="5.0"><polyline points="1,1 4.0,3.5 7,1" fill="none" stroke="#d8d8d8" stroke-width="1.5"/></svg><div class="tx k" style="left:1286.09px;top:110.22px;height:15.96px;font-size:11.40px;color:#e6e6e6;font-weight:normal;">찾기 및</div><div class="tx k" style="left:1288.56px;top:125.12px;height:15.96px;font-size:11.40px;color:#e6e6e6;font-weight:normal;">선택</div><svg class="ab" style="left:1313.1px;top:129.7px" width="8" height="5.0"><polyline points="1,1 4.0,3.5 7,1" fill="none" stroke="#d8d8d8" stroke-width="1.5"/></svg><div class="tx k" style="left:1224.35px;top:149.12px;height:15.96px;font-size:11.40px;color:#dedede;font-weight:normal;">편집</div><div class="ab" style="left:1331px;top:78px;width:1px;height:83px;background:#4a4a4a"></div><svg class="ab" style="left:1345px;top:80px;" width="28" height="29" viewBox="0 0 28 29"><rect x="1.2" y="1.2" width="25.6" height="26.6" fill="none" stroke="#c94f2c" stroke-width="1.8"/><rect x="5" y="5" width="7.5" height="8" fill="none" stroke="#c94f2c" stroke-width="1.4"/><rect x="15.5" y="5" width="7.5" height="8" fill="none" stroke="#c94f2c" stroke-width="1.4"/><rect x="5" y="16" width="7.5" height="8" fill="none" stroke="#c94f2c" stroke-width="1.4"/><rect x="15.5" y="16" width="7.5" height="8" fill="none" stroke="#c94f2c" stroke-width="1.4"/></svg><div class="tx k" style="left:1348.36px;top:110.62px;height:15.96px;font-size:11.40px;color:#e6e6e6;font-weight:normal;">추가</div><div class="tx k" style="left:1347.38px;top:125.12px;height:15.96px;font-size:11.40px;color:#e6e6e6;font-weight:normal;">기능</div><div class="tx k" style="left:1334.96px;top:148.72px;height:15.96px;font-size:11.40px;color:#dedede;font-weight:normal;">추가 기능</div><div class="ab" style="left:1386px;top:78px;width:1px;height:83px;background:#4a4a4a"></div><svg class="ab" style="left:1403.0px;top:150.5px" width="12" height="7.0"><polyline points="1,1 6.0,5.5 11,1" fill="none" stroke="#d8d8d8" stroke-width="1.3"/></svg><div class="ab" style="left:7px;top:173px;width:104px;height:27px;background:#292929;border:1px solid #565656;border-radius:5px;"></div><div class="tx" style="left:12.53px;top:177.70px;height:19.60px;font-size:14.00px;color:#e4e4e4;font-weight:normal;">D6</div><svg class="ab" style="left:96.3px;top:183.9px" width="11" height="6.5"><polyline points="1,1 5.5,5.0 10,1" fill="none" stroke="#d8d8d8" stroke-width="1.3"/></svg><div class="ab" style="left:118.8px;top:181.4px;width:2.7px;height:2.7px;background:#e6e6e6;border-radius:1px"></div><div class="ab" style="left:118.8px;top:185.3px;width:2.7px;height:2.7px;background:#e6e6e6;border-radius:1px"></div><div class="ab" style="left:118.8px;top:189.2px;width:2.7px;height:2.7px;background:#e6e6e6;border-radius:1px"></div><div class="ab" style="left:129px;top:173px;width:69px;height:27px;background:#292929;border:1px solid #565656;border-radius:5px;"></div><svg class="ab" style="left:135px;top:180px;" width="13" height="13" viewBox="0 0 13 13"><path d="M1 1 L12 12 M12 1 L1 12" stroke="#8c8c8c" stroke-width="1.1"/></svg><svg class="ab" style="left:156px;top:180px;" width="16" height="12" viewBox="0 0 16 12"><path d="M1 6 L5.5 11 L15 1" fill="none" stroke="#8c8c8c" stroke-width="1.1"/></svg><div class="tx" style="left:178.5px;top:174.6px;height:23.8px;font-size:17px;color:#e8e8e8;font-weight:normal;font-family:'Liberation Serif',serif;font-style:italic;letter-spacing:-0.3px;-webkit-text-stroke:0.3px currentColor;">fx</div><div class="ab" style="left:202px;top:173px;width:1221px;height:27px;background:#292929;border:1px solid #565656;border-radius:5px;"></div><div class="tx" style="left:211.72px;top:177.25px;height:19.60px;font-size:14.00px;color:#e4e4e4;font-weight:normal;">8</div><svg class="ab" style="left:1407.0px;top:182.5px" width="12" height="7.0"><polyline points="1,1 6.0,5.5 11,1" fill="none" stroke="#d8d8d8" stroke-width="1.3"/></svg><div class="ab" style="left:16px;top:215px;width:521px;height:585px;background:#fff"></div><div class="ab" style="left:465px;top:235px;width:72px;height:1px;background:#e2e2e2"></div><div class="ab" style="left:465px;top:254px;width:72px;height:1px;background:#e2e2e2"></div><div class="ab" style="left:465px;top:266px;width:72px;height:1px;background:#e2e2e2"></div><div class="ab" style="left:465px;top:278px;width:72px;height:1px;background:#e2e2e2"></div><div class="ab" style="left:465px;top:290px;width:72px;height:1px;background:#e2e2e2"></div><div class="ab" style="left:465px;top:302px;width:72px;height:1px;background:#e2e2e2"></div><div class="ab" style="left:465px;top:313px;width:72px;height:1px;background:#e2e2e2"></div><div class="ab" style="left:465px;top:325px;width:72px;height:1px;background:#e2e2e2"></div><div class="ab" style="left:465px;top:337px;width:72px;height:1px;background:#e2e2e2"></div><div class="ab" style="left:465px;top:349px;width:72px;height:1px;background:#e2e2e2"></div><div class="ab" style="left:465px;top:361px;width:72px;height:1px;background:#e2e2e2"></div><div class="ab" style="left:465px;top:373px;width:72px;height:1px;background:#e2e2e2"></div><div class="ab" style="left:465px;top:385px;width:72px;height:1px;background:#e2e2e2"></div><div class="ab" style="left:465px;top:404px;width:72px;height:1px;background:#e2e2e2"></div><div class="ab" style="left:465px;top:416px;width:72px;height:1px;background:#e2e2e2"></div><div class="ab" style="left:465px;top:428px;width:72px;height:1px;background:#e2e2e2"></div><div class="ab" style="left:465px;top:440px;width:72px;height:1px;background:#e2e2e2"></div><div class="ab" style="left:465px;top:451px;width:72px;height:1px;background:#e2e2e2"></div><div class="ab" style="left:465px;top:463px;width:72px;height:1px;background:#e2e2e2"></div><div class="ab" style="left:465px;top:475px;width:72px;height:1px;background:#e2e2e2"></div><div class="ab" style="left:465px;top:487px;width:72px;height:1px;background:#e2e2e2"></div><div class="ab" style="left:465px;top:499px;width:72px;height:1px;background:#e2e2e2"></div><div class="ab" style="left:465px;top:511px;width:72px;height:1px;background:#e2e2e2"></div><div class="ab" style="left:465px;top:523px;width:72px;height:1px;background:#e2e2e2"></div><div class="ab" style="left:465px;top:535px;width:72px;height:1px;background:#e2e2e2"></div><div class="ab" style="left:465px;top:547px;width:72px;height:1px;background:#e2e2e2"></div><div class="ab" style="left:465px;top:559px;width:72px;height:1px;background:#e2e2e2"></div><div class="ab" style="left:465px;top:578px;width:72px;height:1px;background:#e2e2e2"></div><div class="ab" style="left:465px;top:589px;width:72px;height:1px;background:#e2e2e2"></div><div class="ab" style="left:465px;top:601px;width:72px;height:1px;background:#e2e2e2"></div><div class="ab" style="left:465px;top:613px;width:72px;height:1px;background:#e2e2e2"></div><div class="ab" style="left:465px;top:625px;width:72px;height:1px;background:#e2e2e2"></div><div class="ab" style="left:465px;top:637px;width:72px;height:1px;background:#e2e2e2"></div><div class="ab" style="left:465px;top:649px;width:72px;height:1px;background:#e2e2e2"></div><div class="ab" style="left:465px;top:661px;width:72px;height:1px;background:#e2e2e2"></div><div class="ab" style="left:465px;top:673px;width:72px;height:1px;background:#e2e2e2"></div><div class="ab" style="left:465px;top:685px;width:72px;height:1px;background:#e2e2e2"></div><div class="ab" style="left:465px;top:697px;width:72px;height:1px;background:#e2e2e2"></div><div class="ab" style="left:465px;top:708px;width:72px;height:1px;background:#e2e2e2"></div><div class="ab" style="left:465px;top:727px;width:72px;height:1px;background:#e2e2e2"></div><div class="ab" style="left:465px;top:739px;width:72px;height:1px;background:#e2e2e2"></div><div class="ab" style="left:465px;top:751px;width:72px;height:1px;background:#e2e2e2"></div><div class="ab" style="left:465px;top:763px;width:72px;height:1px;background:#e2e2e2"></div><div class="ab" style="left:465px;top:775px;width:72px;height:1px;background:#e2e2e2"></div><div class="ab" style="left:465px;top:787px;width:72px;height:1px;background:#e2e2e2"></div><div class="ab" style="left:465px;top:799px;width:72px;height:1px;background:#e2e2e2"></div><div class="ab" style="left:500px;top:215px;width:1px;height:585px;background:#e2e2e2"></div><div class="ab" style="left:16px;top:215px;width:449px;height:21px;background:#b4c6e7"></div><div class="ab" style="left:16px;top:236px;width:449px;height:19px;background:#b4c6e7"></div><div class="ab" style="left:16px;top:386px;width:449px;height:19px;background:#b4c6e7"></div><div class="ab" style="left:16px;top:560px;width:449px;height:19px;background:#b4c6e7"></div><div class="ab" style="left:16px;top:709px;width:449px;height:19px;background:#b4c6e7"></div><div class="ab" style="left:16px;top:236px;width:449px;height:1px;background:#27324a"></div><div class="ab" style="left:16px;top:255px;width:449px;height:1px;background:#3a3a3a"></div><div class="ab" style="left:16px;top:267px;width:449px;height:1px;background:#3a3a3a"></div><div class="ab" style="left:16px;top:279px;width:449px;height:1px;background:#3a3a3a"></div><div class="ab" style="left:16px;top:291px;width:449px;height:1px;background:#3a3a3a"></div><div class="ab" style="left:16px;top:303px;width:449px;height:1px;background:#3a3a3a"></div><div class="ab" style="left:16px;top:314px;width:449px;height:1px;background:#3a3a3a"></div><div class="ab" style="left:16px;top:326px;width:449px;height:1px;background:#3a3a3a"></div><div class="ab" style="left:16px;top:338px;width:449px;height:1px;background:#3a3a3a"></div><div class="ab" style="left:16px;top:350px;width:449px;height:1px;background:#3a3a3a"></div><div class="ab" style="left:16px;top:362px;width:449px;height:1px;background:#3a3a3a"></div><div class="ab" style="left:16px;top:374px;width:449px;height:1px;background:#3a3a3a"></div><div class="ab" style="left:16px;top:386px;width:449px;height:1px;background:#3a3a3a"></div><div class="ab" style="left:80px;top:255px;width:1px;height:131px;background:#3a3a3a"></div><div class="ab" style="left:145px;top:255px;width:1px;height:131px;background:#3a3a3a"></div><div class="ab" style="left:209px;top:255px;width:1px;height:131px;background:#3a3a3a"></div><div class="ab" style="left:273px;top:255px;width:1px;height:131px;background:#3a3a3a"></div><div class="ab" style="left:337px;top:255px;width:1px;height:131px;background:#3a3a3a"></div><div class="ab" style="left:401px;top:255px;width:1px;height:131px;background:#3a3a3a"></div><div class="ab" style="left:465px;top:255px;width:1px;height:131px;background:#3a3a3a"></div><div class="t cell" style="left:16.5px;top:255.0px;width:64.0px;height:11.9px;color:#e31e1e">일</div><div class="t cell" style="left:80.5px;top:255.0px;width:64.5px;height:11.9px;color:#1a1a1a">월</div><div class="t cell" style="left:145.0px;top:255.0px;width:64.0px;height:11.9px;color:#1a1a1a">화</div><div class="t cell" style="left:209.0px;top:255.0px;width:64.0px;height:11.9px;color:#1a1a1a">수</div><div class="t cell" style="left:273.0px;top:255.0px;width:64.0px;height:11.9px;color:#1a1a1a">목</div><div class="t cell" style="left:337.0px;top:255.0px;width:64.0px;height:11.9px;color:#1a1a1a">금</div><div class="t cell" style="left:401.0px;top:255.0px;width:64.0px;height:11.9px;color:#3333cc">토</div><div class="t cell" style="left:209.0px;top:266.9px;width:64.0px;height:11.9px;color:#1a1a1a">1</div><div class="t cell" style="left:273.0px;top:266.9px;width:64.0px;height:11.9px;color:#1a1a1a">2</div><div class="t cell" style="left:337.0px;top:266.9px;width:64.0px;height:11.9px;color:#1a1a1a">3</div><div class="t cell" style="left:401.0px;top:266.9px;width:64.0px;height:11.9px;color:#3333cc">4</div><div class="t cell" style="left:16.5px;top:290.7px;width:64.0px;height:11.9px;color:#e31e1e">5</div><div class="t cell" style="left:80.5px;top:290.7px;width:64.5px;height:11.9px;color:#1a1a1a">6</div><div class="t cell" style="left:145.0px;top:290.7px;width:64.0px;height:11.9px;color:#1a1a1a">7</div><div class="t cell" style="left:209.0px;top:290.7px;width:64.0px;height:11.9px;color:#1a1a1a">8</div><div class="t cell" style="left:273.0px;top:290.7px;width:64.0px;height:11.9px;color:#1a1a1a">9</div><div class="t cell" style="left:337.0px;top:290.7px;width:64.0px;height:11.9px;color:#1a1a1a">10</div><div class="t cell" style="left:401.0px;top:290.7px;width:64.0px;height:11.9px;color:#3333cc">11</div><div class="t cell" style="left:16.5px;top:314.5px;width:64.0px;height:11.9px;color:#e31e1e">12</div><div class="t cell" style="left:80.5px;top:314.5px;width:64.5px;height:11.9px;color:#1a1a1a">13</div><div class="t cell" style="left:145.0px;top:314.5px;width:64.0px;height:11.9px;color:#1a1a1a">14</div><div class="t cell" style="left:209.0px;top:314.5px;width:64.0px;height:11.9px;color:#1a1a1a">15</div><div class="t cell" style="left:273.0px;top:314.5px;width:64.0px;height:11.9px;color:#1a1a1a">16</div><div class="t cell" style="left:337.0px;top:314.5px;width:64.0px;height:11.9px;color:#1a1a1a">17</div><div class="t cell" style="left:401.0px;top:314.5px;width:64.0px;height:11.9px;color:#3333cc">18</div><div class="t cell" style="left:16.5px;top:338.3px;width:64.0px;height:11.9px;color:#e31e1e">19</div><div class="t cell" style="left:80.5px;top:338.3px;width:64.5px;height:11.9px;color:#1a1a1a">20</div><div class="t cell" style="left:145.0px;top:338.3px;width:64.0px;height:11.9px;color:#1a1a1a">21</div><div class="t cell" style="left:209.0px;top:338.3px;width:64.0px;height:11.9px;color:#1a1a1a">22</div><div class="t cell" style="left:273.0px;top:338.3px;width:64.0px;height:11.9px;color:#1a1a1a">23</div><div class="t cell" style="left:337.0px;top:338.3px;width:64.0px;height:11.9px;color:#1a1a1a">24</div><div class="t cell" style="left:401.0px;top:338.3px;width:64.0px;height:11.9px;color:#3333cc">25</div><div class="t cell" style="left:16.5px;top:362.1px;width:64.0px;height:11.9px;color:#e31e1e">26</div><div class="t cell" style="left:80.5px;top:362.1px;width:64.5px;height:11.9px;color:#1a1a1a">27</div><div class="t cell" style="left:145.0px;top:362.1px;width:64.0px;height:11.9px;color:#1a1a1a">28</div><div class="t cell" style="left:209.0px;top:362.1px;width:64.0px;height:11.9px;color:#1a1a1a">29</div><div class="t cell" style="left:273.0px;top:362.1px;width:64.0px;height:11.9px;color:#1a1a1a">30</div><div class="t cell" style="left:337.0px;top:362.1px;width:64.0px;height:11.9px;color:#1a1a1a">31</div><div class="ab" style="left:16px;top:405px;width:449px;height:1px;background:#3a3a3a"></div><div class="ab" style="left:16px;top:417px;width:449px;height:1px;background:#3a3a3a"></div><div class="ab" style="left:16px;top:429px;width:449px;height:1px;background:#3a3a3a"></div><div class="ab" style="left:16px;top:441px;width:449px;height:1px;background:#3a3a3a"></div><div class="ab" style="left:16px;top:452px;width:449px;height:1px;background:#3a3a3a"></div><div class="ab" style="left:16px;top:464px;width:449px;height:1px;background:#3a3a3a"></div><div class="ab" style="left:16px;top:476px;width:449px;height:1px;background:#3a3a3a"></div><div class="ab" style="left:16px;top:488px;width:449px;height:1px;background:#3a3a3a"></div><div class="ab" style="left:16px;top:500px;width:449px;height:1px;background:#3a3a3a"></div><div class="ab" style="left:16px;top:512px;width:449px;height:1px;background:#3a3a3a"></div><div class="ab" style="left:16px;top:524px;width:449px;height:1px;background:#3a3a3a"></div><div class="ab" style="left:16px;top:536px;width:449px;height:1px;background:#3a3a3a"></div><div class="ab" style="left:16px;top:548px;width:449px;height:1px;background:#3a3a3a"></div><div class="ab" style="left:16px;top:560px;width:449px;height:1px;background:#3a3a3a"></div><div class="ab" style="left:80px;top:405px;width:1px;height:155px;background:#3a3a3a"></div><div class="ab" style="left:145px;top:405px;width:1px;height:155px;background:#3a3a3a"></div><div class="ab" style="left:209px;top:405px;width:1px;height:155px;background:#3a3a3a"></div><div class="ab" style="left:273px;top:405px;width:1px;height:155px;background:#3a3a3a"></div><div class="ab" style="left:337px;top:405px;width:1px;height:155px;background:#3a3a3a"></div><div class="ab" style="left:401px;top:405px;width:1px;height:155px;background:#3a3a3a"></div><div class="ab" style="left:465px;top:405px;width:1px;height:155px;background:#3a3a3a"></div><div class="t cell" style="left:16.5px;top:404.9px;width:64.0px;height:11.9px;color:#e31e1e">일</div><div class="t cell" style="left:80.5px;top:404.9px;width:64.5px;height:11.9px;color:#1a1a1a">월</div><div class="t cell" style="left:145.0px;top:404.9px;width:64.0px;height:11.9px;color:#1a1a1a">화</div><div class="t cell" style="left:209.0px;top:404.9px;width:64.0px;height:11.9px;color:#1a1a1a">수</div><div class="t cell" style="left:273.0px;top:404.9px;width:64.0px;height:11.9px;color:#1a1a1a">목</div><div class="t cell" style="left:337.0px;top:404.9px;width:64.0px;height:11.9px;color:#1a1a1a">금</div><div class="t cell" style="left:401.0px;top:404.9px;width:64.0px;height:11.9px;color:#3333cc">토</div><div class="t cell" style="left:401.0px;top:416.8px;width:64.0px;height:11.9px;color:#3333cc">1</div><div class="t cell" style="left:16.5px;top:440.6px;width:64.0px;height:11.9px;color:#e31e1e">2</div><div class="t cell" style="left:80.5px;top:440.6px;width:64.5px;height:11.9px;color:#1a1a1a">3</div><div class="t cell" style="left:145.0px;top:440.6px;width:64.0px;height:11.9px;color:#1a1a1a">4</div><div class="t cell" style="left:209.0px;top:440.6px;width:64.0px;height:11.9px;color:#1a1a1a">5</div><div class="t cell" style="left:273.0px;top:440.6px;width:64.0px;height:11.9px;color:#1a1a1a">6</div><div class="t cell" style="left:337.0px;top:440.6px;width:64.0px;height:11.9px;color:#1a1a1a">7</div><div class="t cell" style="left:401.0px;top:440.6px;width:64.0px;height:11.9px;color:#3333cc">8</div><div class="t cell" style="left:16.5px;top:464.4px;width:64.0px;height:11.9px;color:#e31e1e">9</div><div class="t cell" style="left:80.5px;top:464.4px;width:64.5px;height:11.9px;color:#1a1a1a">10</div><div class="t cell" style="left:145.0px;top:464.4px;width:64.0px;height:11.9px;color:#1a1a1a">11</div><div class="t cell" style="left:209.0px;top:464.4px;width:64.0px;height:11.9px;color:#1a1a1a">12</div><div class="t cell" style="left:273.0px;top:464.4px;width:64.0px;height:11.9px;color:#1a1a1a">13</div><div class="t cell" style="left:337.0px;top:464.4px;width:64.0px;height:11.9px;color:#1a1a1a">14</div><div class="t cell" style="left:401.0px;top:464.4px;width:64.0px;height:11.9px;color:#3333cc">15</div><div class="t cell" style="left:16.5px;top:488.2px;width:64.0px;height:11.9px;color:#e31e1e">16</div><div class="t cell" style="left:80.5px;top:488.2px;width:64.5px;height:11.9px;color:#1a1a1a">17</div><div class="t cell" style="left:145.0px;top:488.2px;width:64.0px;height:11.9px;color:#1a1a1a">18</div><div class="t cell" style="left:209.0px;top:488.2px;width:64.0px;height:11.9px;color:#1a1a1a">19</div><div class="t cell" style="left:273.0px;top:488.2px;width:64.0px;height:11.9px;color:#1a1a1a">20</div><div class="t cell" style="left:337.0px;top:488.2px;width:64.0px;height:11.9px;color:#1a1a1a">21</div><div class="t cell" style="left:401.0px;top:488.2px;width:64.0px;height:11.9px;color:#3333cc">22</div><div class="t cell" style="left:16.5px;top:512.0px;width:64.0px;height:11.9px;color:#e31e1e">23</div><div class="t cell" style="left:80.5px;top:512.0px;width:64.5px;height:11.9px;color:#1a1a1a">24</div><div class="t cell" style="left:145.0px;top:512.0px;width:64.0px;height:11.9px;color:#1a1a1a">25</div><div class="t cell" style="left:209.0px;top:512.0px;width:64.0px;height:11.9px;color:#1a1a1a">26</div><div class="t cell" style="left:273.0px;top:512.0px;width:64.0px;height:11.9px;color:#1a1a1a">27</div><div class="t cell" style="left:337.0px;top:512.0px;width:64.0px;height:11.9px;color:#1a1a1a">28</div><div class="t cell" style="left:401.0px;top:512.0px;width:64.0px;height:11.9px;color:#3333cc">29</div><div class="t cell" style="left:16.5px;top:535.8px;width:64.0px;height:11.9px;color:#e31e1e">30</div><div class="ab" style="left:16px;top:579px;width:449px;height:1px;background:#3a3a3a"></div><div class="ab" style="left:16px;top:590px;width:449px;height:1px;background:#3a3a3a"></div><div class="ab" style="left:16px;top:602px;width:449px;height:1px;background:#3a3a3a"></div><div class="ab" style="left:16px;top:614px;width:449px;height:1px;background:#3a3a3a"></div><div class="ab" style="left:16px;top:626px;width:449px;height:1px;background:#3a3a3a"></div><div class="ab" style="left:16px;top:638px;width:449px;height:1px;background:#3a3a3a"></div><div class="ab" style="left:16px;top:650px;width:449px;height:1px;background:#3a3a3a"></div><div class="ab" style="left:16px;top:662px;width:449px;height:1px;background:#3a3a3a"></div><div class="ab" style="left:16px;top:674px;width:449px;height:1px;background:#3a3a3a"></div><div class="ab" style="left:16px;top:686px;width:449px;height:1px;background:#3a3a3a"></div><div class="ab" style="left:16px;top:698px;width:449px;height:1px;background:#3a3a3a"></div><div class="ab" style="left:16px;top:709px;width:449px;height:1px;background:#3a3a3a"></div><div class="ab" style="left:80px;top:579px;width:1px;height:130px;background:#3a3a3a"></div><div class="ab" style="left:145px;top:579px;width:1px;height:130px;background:#3a3a3a"></div><div class="ab" style="left:209px;top:579px;width:1px;height:130px;background:#3a3a3a"></div><div class="ab" style="left:273px;top:579px;width:1px;height:130px;background:#3a3a3a"></div><div class="ab" style="left:337px;top:579px;width:1px;height:130px;background:#3a3a3a"></div><div class="ab" style="left:401px;top:579px;width:1px;height:130px;background:#3a3a3a"></div><div class="ab" style="left:465px;top:579px;width:1px;height:130px;background:#3a3a3a"></div><div class="t cell" style="left:16.5px;top:578.6px;width:64.0px;height:11.9px;color:#e31e1e">일</div><div class="t cell" style="left:80.5px;top:578.6px;width:64.5px;height:11.9px;color:#1a1a1a">월</div><div class="t cell" style="left:145.0px;top:578.6px;width:64.0px;height:11.9px;color:#1a1a1a">화</div><div class="t cell" style="left:209.0px;top:578.6px;width:64.0px;height:11.9px;color:#1a1a1a">수</div><div class="t cell" style="left:273.0px;top:578.6px;width:64.0px;height:11.9px;color:#1a1a1a">목</div><div class="t cell" style="left:337.0px;top:578.6px;width:64.0px;height:11.9px;color:#1a1a1a">금</div><div class="t cell" style="left:401.0px;top:578.6px;width:64.0px;height:11.9px;color:#3333cc">토</div><div class="t cell" style="left:80.5px;top:590.5px;width:64.5px;height:11.9px;color:#1a1a1a">1</div><div class="t cell" style="left:145.0px;top:590.5px;width:64.0px;height:11.9px;color:#1a1a1a">2</div><div class="t cell" style="left:209.0px;top:590.5px;width:64.0px;height:11.9px;color:#1a1a1a">3</div><div class="t cell" style="left:273.0px;top:590.5px;width:64.0px;height:11.9px;color:#1a1a1a">4</div><div class="t cell" style="left:337.0px;top:590.5px;width:64.0px;height:11.9px;color:#1a1a1a">5</div><div class="t cell" style="left:401.0px;top:590.5px;width:64.0px;height:11.9px;color:#3333cc">6</div><div class="t cell" style="left:16.5px;top:614.3px;width:64.0px;height:11.9px;color:#e31e1e">7</div><div class="t cell" style="left:80.5px;top:614.3px;width:64.5px;height:11.9px;color:#1a1a1a">8</div><div class="t cell" style="left:145.0px;top:614.3px;width:64.0px;height:11.9px;color:#1a1a1a">9</div><div class="t cell" style="left:209.0px;top:614.3px;width:64.0px;height:11.9px;color:#1a1a1a">10</div><div class="t cell" style="left:273.0px;top:614.3px;width:64.0px;height:11.9px;color:#1a1a1a">11</div><div class="t cell" style="left:337.0px;top:614.3px;width:64.0px;height:11.9px;color:#1a1a1a">12</div><div class="t cell" style="left:401.0px;top:614.3px;width:64.0px;height:11.9px;color:#3333cc">13</div><div class="t cell" style="left:16.5px;top:638.1px;width:64.0px;height:11.9px;color:#e31e1e">14</div><div class="t cell" style="left:80.5px;top:638.1px;width:64.5px;height:11.9px;color:#1a1a1a">15</div><div class="t cell" style="left:145.0px;top:638.1px;width:64.0px;height:11.9px;color:#1a1a1a">16</div><div class="t cell" style="left:209.0px;top:638.1px;width:64.0px;height:11.9px;color:#1a1a1a">17</div><div class="t cell" style="left:273.0px;top:638.1px;width:64.0px;height:11.9px;color:#1a1a1a">18</div><div class="t cell" style="left:337.0px;top:638.1px;width:64.0px;height:11.9px;color:#1a1a1a">19</div><div class="t cell" style="left:401.0px;top:638.1px;width:64.0px;height:11.9px;color:#3333cc">20</div><div class="t cell" style="left:16.5px;top:661.9px;width:64.0px;height:11.9px;color:#e31e1e">21</div><div class="t cell" style="left:80.5px;top:661.9px;width:64.5px;height:11.9px;color:#1a1a1a">22</div><div class="t cell" style="left:145.0px;top:661.9px;width:64.0px;height:11.9px;color:#1a1a1a">23</div><div class="t cell" style="left:209.0px;top:661.9px;width:64.0px;height:11.9px;color:#1a1a1a">24</div><div class="t cell" style="left:273.0px;top:661.9px;width:64.0px;height:11.9px;color:#1a1a1a">25</div><div class="t cell" style="left:337.0px;top:661.9px;width:64.0px;height:11.9px;color:#1a1a1a">26</div><div class="t cell" style="left:401.0px;top:661.9px;width:64.0px;height:11.9px;color:#3333cc">27</div><div class="t cell" style="left:16.5px;top:685.7px;width:64.0px;height:11.9px;color:#e31e1e">28</div><div class="t cell" style="left:80.5px;top:685.7px;width:64.5px;height:11.9px;color:#1a1a1a">29</div><div class="t cell" style="left:145.0px;top:685.7px;width:64.0px;height:11.9px;color:#1a1a1a">30</div><div class="t cell" style="left:209.0px;top:685.7px;width:64.0px;height:11.9px;color:#1a1a1a">31</div><div class="ab" style="left:16px;top:728px;width:449px;height:1px;background:#3a3a3a"></div><div class="ab" style="left:16px;top:740px;width:449px;height:1px;background:#3a3a3a"></div><div class="ab" style="left:16px;top:752px;width:449px;height:1px;background:#3a3a3a"></div><div class="ab" style="left:16px;top:764px;width:449px;height:1px;background:#3a3a3a"></div><div class="ab" style="left:16px;top:776px;width:449px;height:1px;background:#3a3a3a"></div><div class="ab" style="left:16px;top:788px;width:449px;height:1px;background:#3a3a3a"></div><div class="ab" style="left:16px;top:800px;width:449px;height:1px;background:#3a3a3a"></div><div class="ab" style="left:80px;top:728px;width:1px;height:72px;background:#3a3a3a"></div><div class="ab" style="left:145px;top:728px;width:1px;height:72px;background:#3a3a3a"></div><div class="ab" style="left:209px;top:728px;width:1px;height:72px;background:#3a3a3a"></div><div class="ab" style="left:273px;top:728px;width:1px;height:72px;background:#3a3a3a"></div><div class="ab" style="left:337px;top:728px;width:1px;height:72px;background:#3a3a3a"></div><div class="ab" style="left:401px;top:728px;width:1px;height:72px;background:#3a3a3a"></div><div class="ab" style="left:465px;top:728px;width:1px;height:72px;background:#3a3a3a"></div><div class="t cell" style="left:16.5px;top:728.5px;width:64.0px;height:11.9px;color:#e31e1e">일</div><div class="t cell" style="left:80.5px;top:728.5px;width:64.5px;height:11.9px;color:#1a1a1a">월</div><div class="t cell" style="left:145.0px;top:728.5px;width:64.0px;height:11.9px;color:#1a1a1a">화</div><div class="t cell" style="left:209.0px;top:728.5px;width:64.0px;height:11.9px;color:#1a1a1a">수</div><div class="t cell" style="left:273.0px;top:728.5px;width:64.0px;height:11.9px;color:#1a1a1a">목</div><div class="t cell" style="left:337.0px;top:728.5px;width:64.0px;height:11.9px;color:#1a1a1a">금</div><div class="t cell" style="left:401.0px;top:728.5px;width:64.0px;height:11.9px;color:#3333cc">토</div><div class="t cell" style="left:273.0px;top:740.4px;width:64.0px;height:11.9px;color:#1a1a1a">1</div><div class="t cell" style="left:337.0px;top:740.4px;width:64.0px;height:11.9px;color:#1a1a1a">2</div><div class="t cell" style="left:401.0px;top:740.4px;width:64.0px;height:11.9px;color:#3333cc">3</div><div class="t cell" style="left:16.5px;top:764.2px;width:64.0px;height:11.9px;color:#e31e1e">4</div><div class="t cell" style="left:80.5px;top:764.2px;width:64.5px;height:11.9px;color:#1a1a1a">5</div><div class="t cell" style="left:145.0px;top:764.2px;width:64.0px;height:11.9px;color:#1a1a1a">6</div><div class="t cell" style="left:209.0px;top:764.2px;width:64.0px;height:11.9px;color:#1a1a1a">7</div><div class="t cell" style="left:273.0px;top:764.2px;width:64.0px;height:11.9px;color:#1a1a1a">8</div><div class="t cell" style="left:337.0px;top:764.2px;width:64.0px;height:11.9px;color:#1a1a1a">9</div><div class="t cell" style="left:401.0px;top:764.2px;width:64.0px;height:11.9px;color:#3333cc">10</div><div class="t cell" style="left:16.5px;top:788.0px;width:64.0px;height:11.9px;color:#e31e1e">11</div><div class="t cell" style="left:80.5px;top:788.0px;width:64.5px;height:11.9px;color:#1a1a1a">12</div><div class="t cell" style="left:145.0px;top:788.0px;width:64.0px;height:11.9px;color:#1a1a1a">13</div><div class="t cell" style="left:209.0px;top:788.0px;width:64.0px;height:11.9px;color:#1a1a1a">14</div><div class="t cell" style="left:273.0px;top:788.0px;width:64.0px;height:11.9px;color:#1a1a1a">15</div><div class="t cell" style="left:337.0px;top:788.0px;width:64.0px;height:11.9px;color:#1a1a1a">16</div><div class="t cell" style="left:401.0px;top:788.0px;width:64.0px;height:11.9px;color:#3333cc">17</div><div class="t band" style="left:16px;top:215.0px;width:449px;height:21.0px;font-size:13px">2024년</div><div class="t band" style="left:16px;top:236.0px;width:449px;height:19.0px;font-size:12px">5월</div><div class="t band" style="left:16px;top:385.9px;width:449px;height:19.0px;font-size:12px">6월</div><div class="t band" style="left:16px;top:559.6px;width:449px;height:19.0px;font-size:12px">7월</div><div class="t band" style="left:16px;top:709.5px;width:449px;height:19.0px;font-size:12px">8월</div><div class="ab" style="left:0;top:205px;width:537px;height:10px;background:#0a0a0a"></div><svg class="ab" style="left:9px;top:207px" width="7" height="7"><path d="M6.5 0.5 V6.5 H0.5 Z" fill="#6a6a6a"/></svg><div class="t colh" style="left:16.5px;top:206px;width:64.0px;height:9px">A</div><div class="ab" style="left:80px;top:207px;width:1px;height:8px;background:#555"></div><div class="t colh" style="left:80.5px;top:206px;width:64.5px;height:9px">B</div><div class="ab" style="left:145px;top:207px;width:1px;height:8px;background:#555"></div><div class="t colh" style="left:145.0px;top:206px;width:64.0px;height:9px">C</div><div class="ab" style="left:209px;top:207px;width:1px;height:8px;background:#555"></div><div class="t colh" style="left:209.0px;top:206px;width:64.0px;height:9px">D</div><div class="ab" style="left:273px;top:207px;width:1px;height:8px;background:#555"></div><div class="t colh" style="left:273.0px;top:206px;width:64.0px;height:9px">E</div><div class="ab" style="left:337px;top:207px;width:1px;height:8px;background:#555"></div><div class="t colh" style="left:337.0px;top:206px;width:64.0px;height:9px">F</div><div class="ab" style="left:401px;top:207px;width:1px;height:8px;background:#555"></div><div class="t colh" style="left:401.0px;top:206px;width:64.0px;height:9px">G</div><div class="ab" style="left:465px;top:207px;width:1px;height:8px;background:#555"></div><div class="t colh" style="left:465.0px;top:206px;width:36.0px;height:9px">H</div><div class="ab" style="left:501px;top:207px;width:1px;height:8px;background:#555"></div><div class="t colh" style="left:501.0px;top:206px;width:35.5px;height:9px">I</div><div class="ab" style="left:536px;top:207px;width:1px;height:8px;background:#555"></div><div class="t rowh" style="left:0;top:215.0px;width:15px;height:21.0px">1</div><div class="ab" style="left:0;top:236px;width:16px;height:1px;background:#333"></div><div class="t rowh" style="left:0;top:236.0px;width:15px;height:19.0px">2</div><div class="ab" style="left:0;top:255px;width:16px;height:1px;background:#333"></div><div class="t rowh" style="left:0;top:255.0px;width:15px;height:11.9px">3</div><div class="ab" style="left:0;top:267px;width:16px;height:1px;background:#333"></div><div class="t rowh" style="left:0;top:266.9px;width:15px;height:11.9px">4</div><div class="ab" style="left:0;top:279px;width:16px;height:1px;background:#333"></div><div class="t rowh" style="left:0;top:278.8px;width:15px;height:11.9px">5</div><div class="ab" style="left:0;top:291px;width:16px;height:1px;background:#333"></div><div class="t rowh" style="left:0;top:290.7px;width:15px;height:11.9px">6</div><div class="ab" style="left:0;top:303px;width:16px;height:1px;background:#333"></div><div class="t rowh" style="left:0;top:302.6px;width:15px;height:11.9px">7</div><div class="ab" style="left:0;top:314px;width:16px;height:1px;background:#333"></div><div class="t rowh" style="left:0;top:314.5px;width:15px;height:11.9px">8</div><div class="ab" style="left:0;top:326px;width:16px;height:1px;background:#333"></div><div class="t rowh" style="left:0;top:326.4px;width:15px;height:11.9px">9</div><div class="ab" style="left:0;top:338px;width:16px;height:1px;background:#333"></div><div class="t rowh" style="left:0;top:338.3px;width:15px;height:11.9px">10</div><div class="ab" style="left:0;top:350px;width:16px;height:1px;background:#333"></div><div class="t rowh" style="left:0;top:350.2px;width:15px;height:11.9px">11</div><div class="ab" style="left:0;top:362px;width:16px;height:1px;background:#333"></div><div class="t rowh" style="left:0;top:362.1px;width:15px;height:11.9px">12</div><div class="ab" style="left:0;top:374px;width:16px;height:1px;background:#333"></div><div class="t rowh" style="left:0;top:374.0px;width:15px;height:11.9px">13</div><div class="ab" style="left:0;top:386px;width:16px;height:1px;background:#333"></div><div class="t rowh" style="left:0;top:385.9px;width:15px;height:19.0px">14</div><div class="ab" style="left:0;top:405px;width:16px;height:1px;background:#333"></div><div class="t rowh" style="left:0;top:404.9px;width:15px;height:11.9px">15</div><div class="ab" style="left:0;top:417px;width:16px;height:1px;background:#333"></div><div class="t rowh" style="left:0;top:416.8px;width:15px;height:11.9px">16</div><div class="ab" style="left:0;top:429px;width:16px;height:1px;background:#333"></div><div class="t rowh" style="left:0;top:428.7px;width:15px;height:11.9px">17</div><div class="ab" style="left:0;top:441px;width:16px;height:1px;background:#333"></div><div class="t rowh" style="left:0;top:440.6px;width:15px;height:11.9px">18</div><div class="ab" style="left:0;top:452px;width:16px;height:1px;background:#333"></div><div class="t rowh" style="left:0;top:452.5px;width:15px;height:11.9px">19</div><div class="ab" style="left:0;top:464px;width:16px;height:1px;background:#333"></div><div class="t rowh" style="left:0;top:464.4px;width:15px;height:11.9px">20</div><div class="ab" style="left:0;top:476px;width:16px;height:1px;background:#333"></div><div class="t rowh" style="left:0;top:476.3px;width:15px;height:11.9px">21</div><div class="ab" style="left:0;top:488px;width:16px;height:1px;background:#333"></div><div class="t rowh" style="left:0;top:488.2px;width:15px;height:11.9px">22</div><div class="ab" style="left:0;top:500px;width:16px;height:1px;background:#333"></div><div class="t rowh" style="left:0;top:500.1px;width:15px;height:11.9px">23</div><div class="ab" style="left:0;top:512px;width:16px;height:1px;background:#333"></div><div class="t rowh" style="left:0;top:512.0px;width:15px;height:11.9px">24</div><div class="ab" style="left:0;top:524px;width:16px;height:1px;background:#333"></div><div class="t rowh" style="left:0;top:523.9px;width:15px;height:11.9px">25</div><div class="ab" style="left:0;top:536px;width:16px;height:1px;background:#333"></div><div class="t rowh" style="left:0;top:535.8px;width:15px;height:11.9px">26</div><div class="ab" style="left:0;top:548px;width:16px;height:1px;background:#333"></div><div class="t rowh" style="left:0;top:547.7px;width:15px;height:11.9px">27</div><div class="ab" style="left:0;top:560px;width:16px;height:1px;background:#333"></div><div class="t rowh" style="left:0;top:559.6px;width:15px;height:19.0px">28</div><div class="ab" style="left:0;top:579px;width:16px;height:1px;background:#333"></div><div class="t rowh" style="left:0;top:578.6px;width:15px;height:11.9px">29</div><div class="ab" style="left:0;top:590px;width:16px;height:1px;background:#333"></div><div class="t rowh" style="left:0;top:590.5px;width:15px;height:11.9px">30</div><div class="ab" style="left:0;top:602px;width:16px;height:1px;background:#333"></div><div class="t rowh" style="left:0;top:602.4px;width:15px;height:11.9px">31</div><div class="ab" style="left:0;top:614px;width:16px;height:1px;background:#333"></div><div class="t rowh" style="left:0;top:614.3px;width:15px;height:11.9px">32</div><div class="ab" style="left:0;top:626px;width:16px;height:1px;background:#333"></div><div class="t rowh" style="left:0;top:626.2px;width:15px;height:11.9px">33</div><div class="ab" style="left:0;top:638px;width:16px;height:1px;background:#333"></div><div class="t rowh" style="left:0;top:638.1px;width:15px;height:11.9px">34</div><div class="ab" style="left:0;top:650px;width:16px;height:1px;background:#333"></div><div class="t rowh" style="left:0;top:650.0px;width:15px;height:11.9px">35</div><div class="ab" style="left:0;top:662px;width:16px;height:1px;background:#333"></div><div class="t rowh" style="left:0;top:661.9px;width:15px;height:11.9px">36</div><div class="ab" style="left:0;top:674px;width:16px;height:1px;background:#333"></div><div class="t rowh" style="left:0;top:673.8px;width:15px;height:11.9px">37</div><div class="ab" style="left:0;top:686px;width:16px;height:1px;background:#333"></div><div class="t rowh" style="left:0;top:685.7px;width:15px;height:11.9px">38</div><div class="ab" style="left:0;top:698px;width:16px;height:1px;background:#333"></div><div class="t rowh" style="left:0;top:697.6px;width:15px;height:11.9px">39</div><div class="ab" style="left:0;top:709px;width:16px;height:1px;background:#333"></div><div class="t rowh" style="left:0;top:709.5px;width:15px;height:19.0px">40</div><div class="ab" style="left:0;top:728px;width:16px;height:1px;background:#333"></div><div class="t rowh" style="left:0;top:728.5px;width:15px;height:11.9px">41</div><div class="ab" style="left:0;top:740px;width:16px;height:1px;background:#333"></div><div class="t rowh" style="left:0;top:740.4px;width:15px;height:11.9px">42</div><div class="ab" style="left:0;top:752px;width:16px;height:1px;background:#333"></div><div class="t rowh" style="left:0;top:752.3px;width:15px;height:11.9px">43</div><div class="ab" style="left:0;top:764px;width:16px;height:1px;background:#333"></div><div class="t rowh" style="left:0;top:764.2px;width:15px;height:11.9px">44</div><div class="ab" style="left:0;top:776px;width:16px;height:1px;background:#333"></div><div class="t rowh" style="left:0;top:776.1px;width:15px;height:11.9px">45</div><div class="ab" style="left:0;top:788px;width:16px;height:1px;background:#333"></div><div class="t rowh" style="left:0;top:788.0px;width:15px;height:11.9px">46</div><div class="ab" style="left:0;top:800px;width:16px;height:1px;background:#333"></div><div class="ab" style="left:1413px;top:206px;width:15px;height:595px;background:#111111;border-radius:7px;"></div><div class="ab" style="left:1411px;top:210px;width:1px;height:590px;background:#363636;border-radius:0px;"></div><div class="ab" style="left:537px;top:799px;width:875px;height:1px;background:#363636;border-radius:0px;"></div><svg class="ab" style="left:1416px;top:208px;" width="10" height="8" viewBox="0 0 10 8"><path d="M0.5 7 L5 1.5 L9.5 7 Z" fill="#9a9a9a"/></svg><div class="ab" style="left:1417px;top:221px;width:9px;height:282px;background:#9b9b9b;border-radius:4.5px;"></div><svg class="ab" style="left:1416px;top:790px;" width="10" height="8" viewBox="0 0 10 8"><path d="M0.5 0.5 L5 6.8 L9.5 0.5 Z" fill="#9a9a9a"/></svg><div class="ab" style="left:465px;top:215px;width:1px;height:585px;background:#3c3c3c"></div><div class="ab" style="left:0px;top:800px;width:1430px;height:29px;background:#0a0a0a;border-radius:0px;"></div><div class="ab" style="left:146px;top:799px;width:170px;height:8px;background:#ffffff"></div><div class="ab" style="left:136px;top:800px;width:18px;height:14px;background:#0a0a0a;border-top-right-radius:7px"></div><div class="ab" style="left:309px;top:800px;width:18px;height:14px;background:#0a0a0a;border-top-left-radius:7px"></div><div class="ab" style="left:154px;top:799px;width:155px;height:26px;background:#ffffff;border-radius:0 0 7px 7px"></div><div class="tx" style="left:163.78px;top:802.17px;height:18.76px;font-size:13.40px;color:#3c3c3c;font-weight:normal;">24년 05월 ~ 24년 11월</div><div class="ab" style="left:162px;top:821px;width:140px;height:2px;background:#217346;border-radius:0px;"></div><svg class="ab" style="left:22px;top:808px;" width="8" height="12" viewBox="0 0 8 12"><path d="M6.5 1 L1.5 6 L6.5 11" fill="none" stroke="#9a9a9a" stroke-width="1.1"/></svg><svg class="ab" style="left:53px;top:808px;" width="8" height="12" viewBox="0 0 8 12"><path d="M1.5 1 L6.5 6 L1.5 11" fill="none" stroke="#9a9a9a" stroke-width="1.1"/></svg><div class="tx" style="left:112.80px;top:804.22px;height:18.76px;font-size:13.40px;color:#d8d8d8;font-weight:normal;">생성</div><div class="ab" style="left:150px;top:805px;width:1px;height:17px;background:#4a4a4a;border-radius:0px;"></div><div class="ab" style="left:312px;top:805px;width:1px;height:17px;background:#4a4a4a;border-radius:0px;"></div><svg class="ab" style="left:352px;top:808px;" width="12" height="12" viewBox="0 0 12 12"><path d="M6 0.5 V11.5 M0.5 6 H11.5" stroke="#e6e6e6" stroke-width="1.3"/></svg><div class="ab" style="left:874px;top:805px;width:540px;height:18px;background:#111111;border-radius:9px;"></div><div class="ab" style="left:859px;top:809px;width:2px;height:2px;background:#dcdcdc;border-radius:1px;"></div><div class="ab" style="left:859px;top:813px;width:2px;height:2px;background:#dcdcdc;border-radius:1px;"></div><div class="ab" style="left:859px;top:817px;width:2px;height:2px;background:#dcdcdc;border-radius:1px;"></div><svg class="ab" style="left:878px;top:809px;" width="8" height="10" viewBox="0 0 8 10"><path d="M7 0.5 L1 5 L7 9.5 Z" fill="#9a9a9a"/></svg><div class="ab" style="left:891px;top:810px;width:506px;height:8px;background:#9b9b9b;border-radius:4px;"></div><svg class="ab" style="left:1401px;top:809px;" width="8" height="10" viewBox="0 0 8 10"><path d="M1 0.5 L7 5 L1 9.5 Z" fill="#9a9a9a"/></svg><div class="ab" style="left:0px;top:829px;width:1430px;height:20px;background:#0f0f0f;border-radius:0px;"></div><div class="ab" style="left:0px;top:828px;width:1430px;height:1px;background:#262626;border-radius:0px;"></div><div class="tx k" style="left:12.35px;top:831.52px;height:15.96px;font-size:11.40px;color:#e0e0e0;font-weight:normal;">준비</div><svg class="ab" style="left:50px;top:832px;" width="17" height="16" viewBox="0 0 17 16"><path d="M7 13.4 H2.6 Q1.5 13.4 1.5 12.3 V2.7 Q1.5 1.6 2.6 1.6 H13.7 Q14.8 1.6 14.8 2.7 V6.5" fill="none" stroke="#e4e4e4" stroke-width="1.3"/><path d="M2 3.6 H14.3" stroke="#e4e4e4" stroke-width="1"/><circle cx="10.1" cy="10" r="3.6" fill="#0f0f0f" stroke="#e4e4e4" stroke-width="1.3"/><circle cx="10.1" cy="10" r="1.3" fill="#f0f0f0"/></svg><svg class="ab" style="left:80px;top:832px;" width="17" height="16" viewBox="0 0 17 16"><circle cx="6.8" cy="2.8" r="1.7" fill="none" stroke="#e4e4e4" stroke-width="1.2"/><path d="M1.5 5 Q4 6 6.8 6 Q9.6 6 12 5 M6.8 6 V9.5 Q6 12 4 14.5 M6.8 9.5 Q7.5 11 8.5 12" fill="none" stroke="#e4e4e4" stroke-width="1.3" stroke-linecap="round"/><path d="M9 9 L14.5 14.5 M14.5 9 L9 14.5" stroke="#e4e4e4" stroke-width="1.2"/></svg><div class="tx k" style="left:97.37px;top:831.66px;height:15.68px;font-size:11.20px;color:#e6e6e6;font-weight:normal;">접근성: 조사 필요</div><div class="ab" style="left:1149px;top:829px;width:38px;height:20px;background:#1f1f1f;border-radius:0px;"></div><svg class="ab" style="left:1160px;top:832px;" width="15" height="14" viewBox="0 0 15 14"><rect x="0.7" y="0.7" width="13" height="12.5" fill="none" stroke="#f0f0f0" stroke-width="1.3"/><path d="M5 1 V13 M9.3 1 V13 M1 4.8 H13.5 M1 9 H13.5" stroke="#f0f0f0" stroke-width="1.2"/></svg><svg class="ab" style="left:1197px;top:832px;" width="15" height="14" viewBox="0 0 15 14"><rect x="0.7" y="0.7" width="13" height="12.5" fill="none" stroke="#dcdcdc" stroke-width="1.3"/><rect x="3.5" y="3.5" width="7.5" height="7" fill="none" stroke="#dcdcdc" stroke-width="1"/><path d="M5 6 H9.5 M5 8 H9.5" stroke="#dcdcdc" stroke-width="0.8"/></svg><svg class="ab" style="left:1235px;top:832px;" width="15" height="14" viewBox="0 0 15 14"><rect x="0.7" y="0.7" width="13" height="12.5" fill="none" stroke="#dcdcdc" stroke-width="1.3"/><path d="M5 1 V7 H9.3 V1" fill="none" stroke="#dcdcdc" stroke-width="1.3"/></svg><div class="ab" style="left:1266px;top:839px;width:7px;height:1px;background:#cfcfcf;border-radius:0px;"></div><div class="ab" style="left:1278px;top:839px;width:93px;height:1px;background:#8a8a8a;border-radius:0px;"></div><div class="ab" style="left:1300px;top:833px;width:5px;height:12px;background:#b0b0b0;border-radius:1px;"></div><div class="ab" style="left:1324px;top:836px;width:1px;height:7px;background:#8a8a8a;border-radius:0px;"></div><svg class="ab" style="left:1375px;top:835px;" width="9" height="9" viewBox="0 0 9 9"><path d="M4.5 0.5 V8.5 M0.5 4.5 H8.5" stroke="#cfcfcf" stroke-width="1.1"/></svg><div class="tx" style="left:1395.42px;top:831.98px;height:14.84px;font-size:10.60px;color:#e0e0e0;font-weight:normal;">55%</div><div class="ab" style="left:0;top:849px;width:1430px;height:45px;background:linear-gradient(90deg,#1d1a40 0px,#221a48 70px,#30175a 160px,#33185c 220px,#2a1a4c 280px,#201d34 340px,#1f1f26 420px,#1f1f1f 560px,#1f1f1f 100%)"></div><div class="ab" style="left:0px;top:849px;width:1430px;height:1px;background:#2a2a2a;border-radius:0px;opacity:0.6"></div><svg class="ab" style="left:17px;top:864px;" width="25" height="18" viewBox="0 0 25 18"><path d="M5 17 Q0.5 17 1 12.5 Q1.5 9 5.5 9.5 Q7 4 13 4.5 Q18.5 5 19 10 Q23.5 10 23.5 13.5 Q23.5 17 19.5 17 Z" fill="#c9d5ee"/><path d="M5 17 Q1 17 1 13.5 H23.5 Q23.5 17 19.5 17 Z" fill="#9fb3db"/></svg><div class="ab" style="left:30px;top:856px;width:13px;height:13px;border-radius:50%;background:#f07b7b;color:#1a1a1a;font-size:9px;display:flex;align-items:center;justify-content:center;font-weight:bold">1</div><div class="tx" style="left:47.51px;top:856.65px;height:16.10px;font-size:11.50px;color:#ffffff;font-weight:normal;letter-spacing:-0.6px;">16°C</div><div class="tx" style="left:48.37px;top:869.49px;height:15.82px;font-size:11.30px;color:#e0e0e0;font-weight:normal;">대체로 흐림</div><svg class="ab" style="left:333px;top:861px;" width="22" height="22" viewBox="0 0 22 22"><defs><linearGradient id="wg" x1="0" y1="0" x2="1" y2="1"><stop offset="0" stop-color="#6fd6ff"/><stop offset="1" stop-color="#1a8ee0"/></linearGradient></defs><rect x="0" y="0" width="10.3" height="10.3" rx="1" fill="url(#wg)"/><rect x="11.3" y="0" width="10.3" height="10.3" rx="1" fill="url(#wg)"/><rect x="0" y="11.3" width="10.3" height="10.3" rx="1" fill="url(#wg)"/><rect x="11.3" y="11.3" width="10.3" height="10.3" rx="1" fill="url(#wg)"/></svg><div class="ab" style="left:367px;top:856px;width:205px;height:31px;background:#333333;border:1px solid #464646;border-radius:15.5px;"></div><svg class="ab" style="left:378px;top:864px;" width="14" height="14" viewBox="0 0 14 14"><circle cx="6" cy="6" r="4.8" fill="none" stroke="#e6e6e6" stroke-width="1.5"/><path d="M9.5 9.5 L13 13" stroke="#e6e6e6" stroke-width="1.6"/></svg><div class="tx" style="left:400.97px;top:861.36px;height:18.48px;font-size:13.20px;color:#dcdcdc;font-weight:normal;">검색</div><svg class="ab" style="left:523px;top:859px;" width="46" height="27" viewBox="0 0 46 27"><path d="M3 24 Q14 22 25 16 Q34 10 42 3 M24 16 Q17 11 10 3 M30 14 Q36 16 40 20" fill="none" stroke="#b88c74" stroke-width="2"/><ellipse cx="5" cy="9" rx="3" ry="2" fill="#8fb060"/><ellipse cx="39" cy="4" rx="3" ry="2" fill="#8fb060"/><ellipse cx="43" cy="8" rx="2.5" ry="2" fill="#8fb060"/><ellipse cx="37" cy="14" rx="3" ry="1.8" fill="#8fb060"/><ellipse cx="6" cy="20" rx="2" ry="3" fill="#8fb060"/><path d="M13 13 L27 10 L31 17 L26 26 L18 25 L11 18 Z" fill="#7d80d8"/><path d="M26 11 L31 17 L28 22 L24 15 Z" fill="#eef0f8"/><path d="M18 20 L25 19 L26 26 L18 26 Z" fill="#c47440"/><ellipse cx="18.5" cy="8" rx="5.5" ry="5" fill="#f2f3f8"/><circle cx="14.5" cy="3.5" r="2" fill="#6b6fc0"/><circle cx="23" cy="3.5" r="2" fill="#6b6fc0"/><ellipse cx="16.5" cy="8" rx="1.3" ry="1.6" fill="#2a2f50"/><ellipse cx="21" cy="8" rx="1.3" ry="1.6" fill="#2a2f50"/></svg><svg class="ab" style="left:582px;top:861px;" width="24" height="21" viewBox="0 0 24 21"><rect x="0" y="7" width="15" height="13" rx="1.5" fill="#6a6a6a"/><rect x="6" y="0" width="17" height="14" rx="1.5" fill="#efefef"/><rect x="6" y="7" width="9" height="7" fill="#bdbdbd"/></svg><svg class="ab" style="left:624px;top:861px;" width="23" height="22" viewBox="0 0 23 22"><path d="M11 2 A9.5 9.5 0 1 1 4 17.5 L1 21 L2.5 15.5 A9.5 9.5 0 0 1 11 2 Z" fill="#7b7fd9"/><rect x="5.5" y="8" width="8.5" height="7" rx="1.2" fill="#fff"/><path d="M14.5 10.5 L18 8.5 V14.5 L14.5 12.5 Z" fill="#fff"/></svg><div class="ab" style="left:636px;top:856px;width:14px;height:14px;border-radius:50%;background:#9cc6da;color:#1a1a1a;font-size:10px;display:flex;align-items:center;justify-content:center;border:1.5px solid #1f1f1f">1</div><svg class="ab" style="left:664px;top:861px;" width="25" height="21" viewBox="0 0 25 21"><path d="M1 2.5 Q1 1 2.5 1 H9 L11 3.5 H22.5 Q24 3.5 24 5 V19 Q24 20.5 22.5 20.5 H2.5 Q1 20.5 1 19 Z" fill="#f5c142"/><rect x="1" y="6" width="23" height="14.5" rx="1" fill="#ffd866"/><rect x="7" y="15" width="11" height="5.5" rx="1" fill="#1f72c8"/></svg><div class="ab" style="left:672px;top:887px;width:7px;height:3px;background:#9a9a9a;border-radius:1.5px;"></div><svg class="ab" style="left:706px;top:860px;" width="22" height="23" viewBox="0 0 22 23"><path d="M7 6 V3 Q7 1 9 1 H13 Q15 1 15 3 V6" fill="none" stroke="#3aa0d8" stroke-width="1.5"/><rect x="0.5" y="5" width="21" height="17.5" rx="2.5" fill="#f4f4f4"/><rect x="6.5" y="9.5" width="4" height="4" fill="#f25022"/><rect x="11.5" y="9.5" width="4" height="4" fill="#7fba00"/><rect x="6.5" y="14.5" width="4" height="4" fill="#00a4ef"/><rect x="11.5" y="14.5" width="4" height="4" fill="#ffb900"/></svg><svg class="ab" style="left:750px;top:860px;" width="17" height="23" viewBox="0 0 17 23"><rect x="0.5" y="1.5" width="16" height="21" rx="1" fill="#3fb4e6"/><rect x="0.5" y="20" width="16" height="2.5" fill="#b67a4a"/><path d="M3 1 V3 M6 1 V3 M9 1 V3 M12 1 V3 M15 1 V3" stroke="#1c5f8a" stroke-width="1"/><path d="M3.5 7.5 H13.5 M3.5 11 H13.5 M3.5 14.5 H13.5" stroke="#1a4f78" stroke-width="1.3"/></svg><svg class="ab" style="left:788px;top:860px" width="23" height="23" viewBox="0 0 24 24"><circle cx="12" cy="12" r="11.5" fill="#db4437"/><path d="M12 12 L2.04 17.75 A11.5 11.5 0 0 1 1.3 7.2 A11.5 11.5 0 0 1 12 0.5 Z" fill="#0f9d58" transform="rotate(0 12 12)"/><path d="M12 12 L21.96 17.75 A11.5 11.5 0 0 1 2.04 17.75 Z" fill="#0f9d58"/><path d="M12 12 L12 0.5 A11.5 11.5 0 0 1 21.96 17.75 Z" fill="#ffcd40"/><path d="M12 12 L2.04 6.25 A11.5 11.5 0 0 1 12 0.5 L21.96 6.25 Z" fill="#db4437"/><circle cx="12" cy="12" r="5.4" fill="#fff"/><circle cx="12" cy="12" r="4.3" fill="#1a73e8"/></svg><svg class="ab" style="left:831px;top:860px;" width="18" height="23" viewBox="0 0 18 23"><rect x="0.5" y="0.5" width="17" height="22" rx="2" fill="#8d96a3"/><rect x="2.5" y="2.5" width="13" height="4" fill="#74c8f0"/><g fill="#e8eef5"><rect x="2.5" y="9" width="3.5" height="3"/><rect x="7.2" y="9" width="3.5" height="3"/><rect x="2.5" y="13.5" width="3.5" height="3"/><rect x="7.2" y="13.5" width="3.5" height="3"/><rect x="2.5" y="18" width="3.5" height="3"/><rect x="7.2" y="18" width="3.5" height="3"/><rect x="12" y="9" width="3.5" height="3"/></g><rect x="12" y="13.5" width="3.5" height="7.5" fill="#2b5faa"/></svg><svg class="ab" style="left:869px;top:860px;" width="23" height="23" viewBox="0 0 23 23"><path d="M11.5 1 A10.5 10.5 0 1 1 5 20 L1.5 22 L3 17 A10.5 10.5 0 0 1 11.5 1 Z" fill="#1fc8b4"/><path d="M3 9 Q8 1 16 2 Q21 4 22 10 Q14 6 3 9 Z" fill="#1b2a6b"/><path d="M4 14 Q12 18 21 13 Q20 20 12 21 Q6 21 4 14 Z" fill="#e8fbff"/></svg><svg class="ab" style="left:912px;top:861px;" width="22" height="22" viewBox="0 0 22 22"><rect x="0.5" y="3" width="19" height="15" rx="3" fill="#2ebd5a"/><text x="3" y="14" font-size="10" font-weight="bold" fill="#fff" font-family="Liberation Sans">Q+</text><path d="M20 6 L9 19 L7.5 21.5 L10.5 20.5 L21.5 8 Z" fill="#f5c142" stroke="#8a6a2a" stroke-width="0.6"/></svg><svg class="ab" style="left:951px;top:860px" width="23" height="23" viewBox="0 0 24 24"><circle cx="12" cy="12" r="11.5" fill="#db4437"/><path d="M12 12 L2.04 17.75 A11.5 11.5 0 0 1 1.3 7.2 A11.5 11.5 0 0 1 12 0.5 Z" fill="#0f9d58" transform="rotate(0 12 12)"/><path d="M12 12 L21.96 17.75 A11.5 11.5 0 0 1 2.04 17.75 Z" fill="#0f9d58"/><path d="M12 12 L12 0.5 A11.5 11.5 0 0 1 21.96 17.75 Z" fill="#ffcd40"/><path d="M12 12 L2.04 6.25 A11.5 11.5 0 0 1 12 0.5 L21.96 6.25 Z" fill="#db4437"/><circle cx="12" cy="12" r="5.4" fill="#fff"/><circle cx="12" cy="12" r="4.3" fill="#1a73e8"/></svg><div class="ab" style="left:962px;top:855px;width:16px;height:16px;border-radius:50%;background:#4a4a4a;color:#d0d0d0;font-size:6px;display:flex;align-items:center;justify-content:center;border:1px solid #222">도훈</div><div class="ab" style="left:960px;top:887px;width:6px;height:3px;background:#9a9a9a;border-radius:1.5px;"></div><div class="ab" style="left:985px;top:853px;width:37px;height:37px;background:#2d2d2d;border-radius:5px;"></div><svg class="ab" style="left:992px;top:860px;" width="24" height="23" viewBox="0 0 24 23"><rect x="0.5" y="0.5" width="17" height="17" rx="2" fill="#f2f2f2"/><path d="M3.5 3.5 H12 M3.5 3.5 V12" stroke="#d13438" stroke-width="1.6" stroke-dasharray="2 1.5"/><path d="M9 11 L21 21 M21 11 L9 21" stroke="#6a6a6a" stroke-width="1.2"/><circle cx="9.5" cy="20" r="2.3" fill="none" stroke="#3fa0e0" stroke-width="1.4"/><circle cx="20.5" cy="12" r="2.3" fill="none" stroke="#3fa0e0" stroke-width="1.4"/></svg><div class="ab" style="left:997px;top:887px;width:15px;height:3px;background:#8cc8e8;border-radius:1.5px;"></div><svg class="ab" style="left:1033px;top:860px;" width="23" height="23" viewBox="0 0 23 23"><rect x="6" y="1" width="16.5" height="21" rx="1.5" fill="#21a366"/><rect x="6" y="1" width="16.5" height="7" fill="#33c481"/><rect x="6" y="15" width="16.5" height="7" rx="1" fill="#107c41"/><rect x="1" y="5" width="12" height="13" rx="1.5" fill="#185c37"/><path d="M4 8 L10 15 M10 8 L4 15" stroke="#fff" stroke-width="1.6"/></svg><div class="ab" style="left:1042px;top:887px;width:6px;height:3px;background:#9a9a9a;border-radius:1.5px;"></div><svg class="ab" style="left:1075px;top:860px;" width="22" height="23" viewBox="0 0 22 23"><rect x="0" y="0" width="22" height="23" rx="4" fill="#ffe812"/><ellipse cx="11" cy="10.5" rx="8.5" ry="6.5" fill="#3a1e1e"/><path d="M6 15 L5 19 L9 16 Z" fill="#3a1e1e"/><text x="4.3" y="12.5" font-size="5" font-weight="bold" fill="#ffe812" font-family="Liberation Sans">TALK</text></svg><div class="ab" style="left:1083px;top:887px;width:6px;height:3px;background:#9a9a9a;border-radius:1.5px;"></div><svg class="ab" style="left:1198.5px;top:868.0px" width="12" height="7.0"><polyline points="1,5.5 6.0,1 11,5.5" fill="none" stroke="#e6e6e6" stroke-width="1.4"/></svg><svg class="ab" style="left:1228px;top:864px;" width="13" height="15" viewBox="0 0 13 15"><path d="M0.8 14.5 L6.5 0.8 L12.2 14.5 M2.6 10 H10.4" fill="none" stroke="#e6e6e6" stroke-width="1.1"/></svg><svg class="ab" style="left:1255px;top:864px;" width="17" height="13" viewBox="0 0 17 13"><path d="M1 5 Q8.5 -1.5 16 5" fill="none" stroke="#eee" stroke-width="1.3"/><path d="M3.5 7.5 Q8.5 3 13.5 7.5" fill="none" stroke="#eee" stroke-width="1.3"/><path d="M6 10 Q8.5 8 11 10" fill="none" stroke="#eee" stroke-width="1.3"/><circle cx="8.5" cy="11.8" r="1.1" fill="#eee"/></svg><svg class="ab" style="left:1278px;top:864px;" width="16" height="13" viewBox="0 0 16 13"><path d="M1 4.5 H4 L8 1 V12 L4 8.5 H1 Z" fill="none" stroke="#eee" stroke-width="1.2" stroke-linejoin="round"/><path d="M10 4 Q11.5 6.5 10 9 M12.5 2.5 Q15 6.5 12.5 10.5" fill="none" stroke="#eee" stroke-width="1.1"/></svg><svg class="ab" style="left:1301px;top:866px;" width="16" height="12" viewBox="0 0 16 12"><rect x="0.6" y="1.6" width="12.5" height="8.5" rx="2" fill="none" stroke="#eee" stroke-width="1.2"/><rect x="2.3" y="3.3" width="5" height="5" fill="#eee"/><rect x="13.8" y="4" width="1.6" height="3.5" fill="#eee"/></svg><div class="tx" style="left:1341.46px;top:855.76px;height:15.68px;font-size:11.20px;color:#f0f0f0;font-weight:normal;">오후 6:16</div><div class="tx" style="left:1331.39px;top:871.52px;height:15.96px;font-size:11.40px;color:#f0f0f0;font-weight:normal;">2024-03-16</div><svg class="ab" style="left:1398px;top:864px;" width="13" height="15" viewBox="0 0 13 15"><path d="M2 11 V6.5 Q2 1.5 6.5 1.5 Q11 1.5 11 6.5 V11 L12.3 12.3 H0.7 Z" fill="none" stroke="#eee" stroke-width="1.2" stroke-linejoin="round"/><path d="M4.8 13.5 Q6.5 15 8.2 13.5" fill="none" stroke="#eee" stroke-width="1.1"/></svg></body></html>
